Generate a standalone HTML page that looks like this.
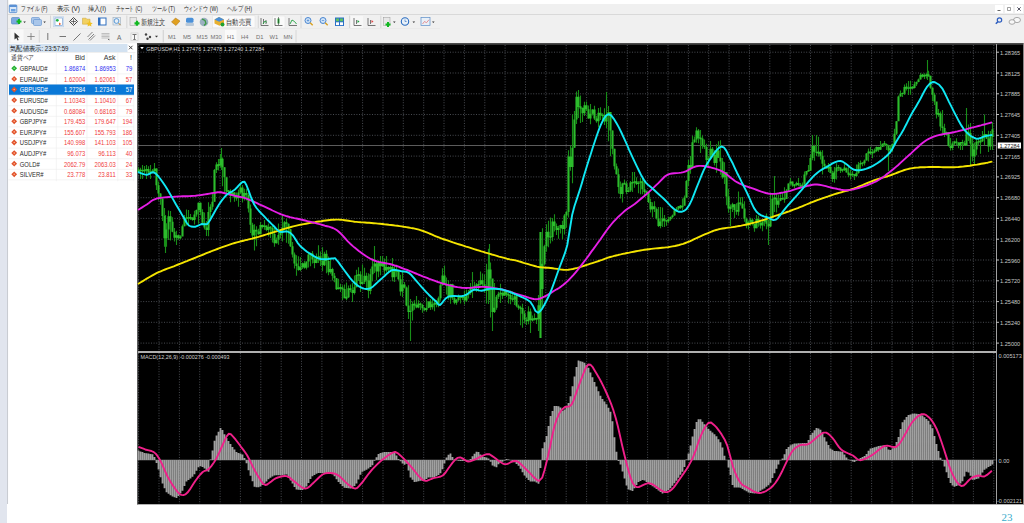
<!DOCTYPE html>
<html><head><meta charset="utf-8">
<style>
html,body{margin:0;padding:0;width:1024px;height:523px;overflow:hidden;background:#fff;}
svg{position:absolute;left:0;top:0;display:block;}
text{font-family:"Liberation Sans",sans-serif;}
.mn{font-size:7.2px;fill:#262626;}
.tb{font-size:7.5px;fill:#333;}
.tf{font-size:5.8px;fill:#707070;}
.mw{font-size:7px;fill:#333;}
.bid{font-size:6.9px;fill:#f04848;text-anchor:end;}
.blu{font-size:6.9px;fill:#3b3bf0;text-anchor:end;}
.wh{font-size:6.9px;fill:#fff;text-anchor:end;}
.ax{font-size:5.6px;fill:#c8c8c8;}
</style></head><body>
<svg width="1024" height="523" viewBox="0 0 1024 523" shape-rendering="auto">
<!-- page background -->
<rect x="0" y="0" width="1024" height="523" fill="#ffffff"/>
<rect x="0" y="0" width="7" height="523" fill="#e1e5ee"/>
<rect x="7" y="0" width="1.2" height="504" fill="#c9ccd2"/>
<!-- menu + toolbars -->
<rect x="8" y="4" width="1016" height="39.5" fill="#f0f0f0"/>
<rect x="8" y="14" width="1016" height="0.8" fill="#d4d4d4"/>
<rect x="8" y="28.4" width="432" height="0.6" fill="#e2e2e2"/>
<!-- window buttons -->
<rect x="995" y="5" width="8" height="8" fill="#fff"/>
<rect x="1005" y="5" width="8" height="8" fill="#fff"/>
<rect x="1015" y="5" width="8" height="8" fill="#fff"/>
<path d="M997.5 10.5h3" stroke="#555" stroke-width="0.9"/>
<path d="M1007.5 7.5h3v3h-3z" stroke="#777" stroke-width="0.7" fill="none"/>
<path d="M1017.3 7.3l3.4 3.4M1020.7 7.3l-3.4 3.4" stroke="#445" stroke-width="0.9"/>
<!-- menu -->
<rect x="9.3" y="5" width="7.5" height="7.6" rx="0.8" fill="#dbe8f7" stroke="#5a90d4" stroke-width="0.9"/>
<rect x="9.3" y="5" width="7.5" height="2" fill="#5a90d4"/>
<rect x="11" y="9" width="4.5" height="2.5" fill="#6aa0e0"/>
<text class="mn" x="21" y="11.3" textLength="26.5" lengthAdjust="spacingAndGlyphs">ファイル (F)</text>
<text class="mn" x="57" y="11.3" textLength="23" lengthAdjust="spacingAndGlyphs">表示 (V)</text>
<text class="mn" x="88" y="11.3" textLength="18" lengthAdjust="spacingAndGlyphs">挿入(I)</text>
<text class="mn" x="115.5" y="11.3" textLength="26.5" lengthAdjust="spacingAndGlyphs">チャート (C)</text>
<text class="mn" x="151.5" y="11.3" textLength="23.5" lengthAdjust="spacingAndGlyphs">ツール (T)</text>
<text class="mn" x="183.5" y="11.3" textLength="34.5" lengthAdjust="spacingAndGlyphs">ウィンドウ (W)</text>
<text class="mn" x="227" y="11.3" textLength="25" lengthAdjust="spacingAndGlyphs">ヘルプ (H)</text>
<!-- right icons -->
<circle cx="999.5" cy="20" r="2.2" fill="none" stroke="#2f5fc0" stroke-width="1.2"/>
<path d="M998 21.6l-2.2 2.2" stroke="#2f5fc0" stroke-width="1.5"/>
<ellipse cx="1017" cy="20" rx="3.5" ry="2.6" fill="#f8f8f8" stroke="#888" stroke-width="0.7"/>
<ellipse cx="1012" cy="22" rx="3" ry="2.3" fill="#f8f8f8" stroke="#888" stroke-width="0.7"/>
<!-- toolbar 1 -->
<rect x="8.5" y="15" width="431.5" height="13.4" fill="#f0f0f0"/>
<g>
 <rect x="11.5" y="17.5" width="8" height="6.5" rx="1" fill="#7aa8de" stroke="#4d7fc0" stroke-width="0.6"/>
 <path d="M16.5 21.5h5M19 19v5" stroke="#10b820" stroke-width="2.2"/>
 <path d="M23.3 21.5h2.6l-1.3 1.5z" fill="#333"/>
 <rect x="31.5" y="17.5" width="8" height="6" rx="1" fill="#a9c6ea" stroke="#5d8fcc" stroke-width="0.6"/>
 <rect x="33.5" y="19.5" width="8" height="6" rx="1" fill="#a9c6ea" stroke="#5d8fcc" stroke-width="0.6"/>
 <path d="M43.3 21.5h2.6l-1.3 1.5z" fill="#333"/>
 <path d="M50.5 15.5V28" stroke="#d0d0d0" stroke-width="0.8"/>
 <rect x="53.5" y="16.8" width="10.2" height="10" fill="#dfe9f5" stroke="#bcd0e8" stroke-width="0.6"/>
 <rect x="55" y="18" width="7.5" height="7.5" fill="#fff" stroke="#6b9ad0" stroke-width="0.6"/>
 <circle cx="57.3" cy="20.3" r="1.4" fill="#20b040"/>
 <path d="M59 22.5l2.3 1.6-2.3 1.2z" fill="#e86030"/>
 <path d="M73.5 17.5l4 4-4 4-4-4z" fill="none" stroke="#444" stroke-width="1"/>
 <path d="M73.5 19v5M71 21.5h5" stroke="#444" stroke-width="0.7"/>
 <path d="M82.5 18.2h3.5l1 1h3v5h-7.5z" fill="#f2d060" stroke="#c9a030" stroke-width="0.5"/>
 <path d="M89.5 20.5l1 2.2 2.2.2-1.7 1.5.5 2.2-2-1.2-2 1.2.5-2.2-1.7-1.5 2.2-.2z" fill="#f0c020"/>
 <rect x="98" y="17.5" width="8.5" height="8" fill="#2f6fc0"/>
 <rect x="100.5" y="18.5" width="5" height="6" fill="#fff"/>
 <rect x="113" y="17.5" width="7.5" height="7.5" fill="#e8eef5" stroke="#9ab" stroke-width="0.6"/>
 <circle cx="116.5" cy="21" r="2.4" fill="none" stroke="#4a90d0" stroke-width="0.9"/>
 <path d="M118.5 23l2 2.2" stroke="#b08030" stroke-width="1"/>
 <path d="M126.8 15.5V28" stroke="#d0d0d0" stroke-width="0.8"/>
 <rect x="130" y="17.5" width="6.5" height="8" fill="#e8e8e8" stroke="#999" stroke-width="0.5"/>
 <path d="M134.5 23.3h5M137 20.8v5" stroke="#10b820" stroke-width="2.2"/>
 <text class="tb" x="140.5" y="24.5" textLength="24.5" lengthAdjust="spacingAndGlyphs">新規注文</text>
 <path d="M171.5 22l4-4 4.5 3-4 4.5z" fill="#e0a020" stroke="#a87010" stroke-width="0.5"/>
 <rect x="186" y="17.8" width="7.5" height="5" rx="1.5" fill="#4a90d8"/>
 <rect x="185.5" y="23" width="8.5" height="3" rx="1" fill="#b8c8d8"/>
 <circle cx="204" cy="22" r="4.3" fill="#9bb0c0"/>
 <path d="M202 19l3 1.5 1 3-2 2" fill="none" stroke="#3a9a40" stroke-width="1.2"/>
 <rect x="212.5" y="15.8" width="42.5" height="12" fill="#fafafa" stroke="#e0e0e0" stroke-width="0.5"/>
 <path d="M214.5 19.5l4.5-2.5 5 2.5v4l-4.5 2.3-5-2.3z" fill="#e8b030"/>
 <path d="M214.5 19.5l4.5-2.5 5 2.5-4.8 2.2z" fill="#4a8fd8"/>
 <circle cx="222.5" cy="24.5" r="2" fill="#20a030"/>
 <text class="tb" x="226" y="24.5" textLength="25" lengthAdjust="spacingAndGlyphs">自動売買</text>
 <path d="M258.3 15.5V28" stroke="#d0d0d0" stroke-width="0.8"/>
 <path d="M261 18v7.5h7.5M263.5 19v5M266 20v4" stroke="#555" stroke-width="0.8" fill="none"/>
 <path d="M263 24l2-3 2 1.5" stroke="#20a040" stroke-width="0.9" fill="none"/>
 <rect x="272.5" y="16" width="12.5" height="12" fill="#fafafa" stroke="#e2e2e2" stroke-width="0.5"/>
 <path d="M275 18v7.5h7.5" stroke="#555" stroke-width="0.8" fill="none"/>
 <rect x="277.5" y="18.5" width="2" height="5" fill="#30b040"/>
 <path d="M278.5 17v8" stroke="#222" stroke-width="0.5"/>
 <path d="M289 18v7.5h8" stroke="#555" stroke-width="0.8" fill="none"/>
 <path d="M290 24l2-4 2.5 1.5 2 2.5" stroke="#20a040" stroke-width="0.9" fill="none"/>
 <path d="M301 15.5V28" stroke="#d0d0d0" stroke-width="0.8"/>
 <circle cx="308" cy="20.5" r="3" fill="#cfe3f7" stroke="#3a7acc" stroke-width="0.9"/>
 <path d="M306.8 20.5h2.4M308 19.3v2.4" stroke="#3a7acc" stroke-width="0.6"/>
 <path d="M310.2 22.8l2.5 2.5" stroke="#d8a020" stroke-width="1.4"/>
 <circle cx="323" cy="20.5" r="3" fill="#cfe3f7" stroke="#3a7acc" stroke-width="0.9"/>
 <path d="M321.8 20.5h2.4" stroke="#3a7acc" stroke-width="0.6"/>
 <path d="M325.2 22.8l2.5 2.5" stroke="#d8a020" stroke-width="1.4"/>
 <rect x="335" y="17.5" width="9" height="8.5" fill="#2a70c8"/>
 <rect x="336" y="18.5" width="3" height="2.8" fill="#5ec060"/><rect x="340" y="18.5" width="3" height="2.8" fill="#5ec060"/>
 <rect x="336" y="22.3" width="3" height="2.8" fill="#fff"/><rect x="340" y="22.3" width="3" height="2.8" fill="#fff"/>
 <path d="M349.5 15.5V28" stroke="#d0d0d0" stroke-width="0.8"/>
 <rect x="351" y="16" width="12" height="12" fill="#f7f7f7"/>
 <path d="M354 18v7.5h7.5M356.5 20v4" stroke="#555" stroke-width="0.8" fill="none"/>
 <path d="M357.5 20l2 1.5-2 1.5z" fill="#20a040"/>
 <path d="M368 18v7.5h7.5M370.5 20v4" stroke="#555" stroke-width="0.8" fill="none"/>
 <path d="M371.5 20l2 1.5-2 1.5z" fill="#e04040"/>
 <path d="M380.8 15.5V28" stroke="#d0d0d0" stroke-width="0.8"/>
 <rect x="383.5" y="17.5" width="6.5" height="8" fill="#e8e8e8" stroke="#999" stroke-width="0.5"/>
 <path d="M385.5 24.5h5M388 22v5" stroke="#10b820" stroke-width="2"/>
 <path d="M393 21.5h2.6l-1.3 1.5z" fill="#333"/>
 <circle cx="405" cy="21.5" r="3.7" fill="#e8f0f8" stroke="#2a6cc0" stroke-width="1.1"/>
 <path d="M405 19.5v2h1.6" stroke="#2a6cc0" stroke-width="0.6" fill="none"/>
 <path d="M412.5 21.5h2.6l-1.3 1.5z" fill="#333"/>
 <rect x="421" y="17.5" width="9" height="8" fill="#e8f0f8" stroke="#5a8cc8" stroke-width="0.7"/>
 <path d="M422.5 24l2-2.5 2 1.2 2.5-3" stroke="#e05050" stroke-width="0.6" fill="none"/>
 <path d="M432 21.5h2.6l-1.3 1.5z" fill="#333"/>
</g>
<!-- toolbar 2 -->
<g>
 <rect x="10.5" y="29.5" width="13" height="13" fill="#f9f9f9"/>
 <path d="M14.5 32.5v7l1.8-1.6 1.4 2.6 1-.5-1.3-2.5 2.3-.2z" fill="#333"/>
 <path d="M31 33v7M27.3 36.5h7.4" stroke="#777" stroke-width="0.8"/>
 <path d="M39.3 30V42.5" stroke="#d0d0d0" stroke-width="0.8"/>
 <path d="M47.8 33v7" stroke="#666" stroke-width="0.9"/>
 <path d="M59.5 36.5h6.5" stroke="#666" stroke-width="0.9"/>
 <path d="M73.5 40.5l7-7" stroke="#666" stroke-width="0.9"/>
 <path d="M87.5 37l5-5M88.5 39.5l5.5-5.5M90 40.5l5-5" stroke="#666" stroke-width="0.8"/>
 <path d="M101.5 33.5h8M101.5 35h8M101.5 36.5h8M101.5 38h8" stroke="#aaa" stroke-width="0.7"/><path d="M108 39.3l1.5 0.5" stroke="#555" stroke-width="0.9"/>
 <text x="117" y="39.6" style="font-size:6.5px;fill:#666">A</text>
 <rect x="131" y="33" width="7" height="7.5" fill="#f6f6f6" stroke="#c8c8c8" stroke-width="0.6"/>
 <path d="M132.5 34.5h4M134.5 34.5v5M133.3 39.5h2.4" stroke="#777" stroke-width="1"/>
 <circle cx="146" cy="34.5" r="1.2" fill="#444"/><circle cx="150" cy="37" r="1.2" fill="#444"/><circle cx="147.5" cy="38.8" r="1.2" fill="#444"/>
 <path d="M155 35.8h3l-1.5 1.8z" fill="#333"/>
 <path d="M163.3 30V42.5" stroke="#d4d4d4" stroke-width="1.2"/>
 <text class="tf" x="168" y="38.8">M1</text>
 <text class="tf" x="183" y="38.8">M5</text>
 <text class="tf" x="196.5" y="38.8">M15</text>
 <text class="tf" x="210.5" y="38.8">M30</text>
 <rect x="225" y="30" width="11.5" height="12.5" fill="#fafafa"/>
 <text class="tf" x="227" y="38.8">H1</text>
 <text class="tf" x="241" y="38.8">H4</text>
 <text class="tf" x="256" y="38.8">D1</text>
 <text class="tf" x="269.5" y="38.8">W1</text>
 <text class="tf" x="283.5" y="38.8">MN</text>
 <path d="M296 30V42.5" stroke="#d0d0d0" stroke-width="0.8"/>
</g>
<!-- market watch -->
<rect x="8.2" y="43.5" width="128.3" height="461" fill="#ffffff"/>
<rect x="8.5" y="44" width="119" height="8" fill="#d3e2f1"/>
<text x="10" y="50.5" style="font-size:6.8px;fill:#1e1e1e" textLength="58.5" lengthAdjust="spacingAndGlyphs">気配値表示: 23:57:59</text>
<path d="M129 45.8l3.5 3.5M132.5 45.8l-3.5 3.5" stroke="#444" stroke-width="1"/>
<rect x="8.5" y="52.3" width="127" height="0.6" fill="#e4e4e4"/>
<text class="mw" x="11" y="60.3" textLength="23" lengthAdjust="spacingAndGlyphs">通貨ペア</text>
<text class="mw" x="85" y="60.3" text-anchor="end">Bid</text>
<text class="mw" x="115.5" y="60.3" text-anchor="end">Ask</text>
<text class="mw" x="132" y="60.3" text-anchor="end">!</text>
<path d="M56.3 52.5V181.2M87 52.5V181.2M117.8 52.5V181.2M133.8 52.5V181.2" stroke="#ececec" stroke-width="0.6"/>
<path d="M8.5 73.9H134" stroke="#ececec" stroke-width="0.6"/>
<path d="M14.2 65.4l2.9 2.9-2.9 2.9-2.9-2.9z" fill="#22b030"/>
<circle cx="14.2" cy="68.3" r="0.8" fill="#90e890"/>
<g transform="translate(19.8 71.1) scale(0.84 1)"><text x="0" y="0" style="font-size:7px;fill:#2a2a2a" text-anchor="start">GBPAUD#</text></g>
<g transform="translate(85.2 71.1) scale(0.84 1)"><text x="0" y="0" style="font-size:7px;fill:#2e2ef0" text-anchor="end">1.86874</text></g>
<g transform="translate(115.7 71.1) scale(0.84 1)"><text x="0" y="0" style="font-size:7px;fill:#2e2ef0" text-anchor="end">1.86953</text></g>
<g transform="translate(132.2 71.1) scale(0.84 1)"><text x="0" y="0" style="font-size:7px;fill:#2e2ef0" text-anchor="end">79</text></g>
<path d="M8.5 84.5H134" stroke="#ececec" stroke-width="0.6"/>
<path d="M14.2 76.0l2.9 2.9-2.9 2.9-2.9-2.9z" fill="#e0522a"/>
<circle cx="14.2" cy="78.9" r="0.8" fill="#ffb090"/>
<g transform="translate(19.8 81.7) scale(0.84 1)"><text x="0" y="0" style="font-size:7px;fill:#2a2a2a" text-anchor="start">EURAUD#</text></g>
<g transform="translate(85.2 81.7) scale(0.84 1)"><text x="0" y="0" style="font-size:7px;fill:#f03a3a" text-anchor="end">1.62004</text></g>
<g transform="translate(115.7 81.7) scale(0.84 1)"><text x="0" y="0" style="font-size:7px;fill:#f03a3a" text-anchor="end">1.62061</text></g>
<g transform="translate(132.2 81.7) scale(0.84 1)"><text x="0" y="0" style="font-size:7px;fill:#f03a3a" text-anchor="end">57</text></g>
<rect x="9" y="84.5" width="125" height="10.6" fill="#0a78d7"/>
<path d="M8.5 95.1H134" stroke="#ececec" stroke-width="0.6"/>
<path d="M14.2 86.6l2.9 2.9-2.9 2.9-2.9-2.9z" fill="#e0522a"/>
<circle cx="14.2" cy="89.5" r="0.8" fill="#ffb090"/>
<g transform="translate(19.8 92.3) scale(0.84 1)"><text x="0" y="0" style="font-size:7px;fill:#fff" text-anchor="start">GBPUSD#</text></g>
<g transform="translate(85.2 92.3) scale(0.84 1)"><text x="0" y="0" style="font-size:7px;fill:#ffffff" text-anchor="end">1.27284</text></g>
<g transform="translate(115.7 92.3) scale(0.84 1)"><text x="0" y="0" style="font-size:7px;fill:#ffffff" text-anchor="end">1.27341</text></g>
<g transform="translate(132.2 92.3) scale(0.84 1)"><text x="0" y="0" style="font-size:7px;fill:#ffffff" text-anchor="end">57</text></g>
<path d="M8.5 105.7H134" stroke="#ececec" stroke-width="0.6"/>
<path d="M14.2 97.2l2.9 2.9-2.9 2.9-2.9-2.9z" fill="#e0522a"/>
<circle cx="14.2" cy="100.1" r="0.8" fill="#ffb090"/>
<g transform="translate(19.8 102.9) scale(0.84 1)"><text x="0" y="0" style="font-size:7px;fill:#2a2a2a" text-anchor="start">EURUSD#</text></g>
<g transform="translate(85.2 102.9) scale(0.84 1)"><text x="0" y="0" style="font-size:7px;fill:#f03a3a" text-anchor="end">1.10343</text></g>
<g transform="translate(115.7 102.9) scale(0.84 1)"><text x="0" y="0" style="font-size:7px;fill:#f03a3a" text-anchor="end">1.10410</text></g>
<g transform="translate(132.2 102.9) scale(0.84 1)"><text x="0" y="0" style="font-size:7px;fill:#f03a3a" text-anchor="end">67</text></g>
<path d="M8.5 116.3H134" stroke="#ececec" stroke-width="0.6"/>
<path d="M14.2 107.8l2.9 2.9-2.9 2.9-2.9-2.9z" fill="#e0522a"/>
<circle cx="14.2" cy="110.7" r="0.8" fill="#ffb090"/>
<g transform="translate(19.8 113.5) scale(0.84 1)"><text x="0" y="0" style="font-size:7px;fill:#2a2a2a" text-anchor="start">AUDUSD#</text></g>
<g transform="translate(85.2 113.5) scale(0.84 1)"><text x="0" y="0" style="font-size:7px;fill:#f03a3a" text-anchor="end">0.68084</text></g>
<g transform="translate(115.7 113.5) scale(0.84 1)"><text x="0" y="0" style="font-size:7px;fill:#f03a3a" text-anchor="end">0.68163</text></g>
<g transform="translate(132.2 113.5) scale(0.84 1)"><text x="0" y="0" style="font-size:7px;fill:#f03a3a" text-anchor="end">79</text></g>
<path d="M8.5 126.9H134" stroke="#ececec" stroke-width="0.6"/>
<path d="M14.2 118.4l2.9 2.9-2.9 2.9-2.9-2.9z" fill="#e0522a"/>
<circle cx="14.2" cy="121.3" r="0.8" fill="#ffb090"/>
<g transform="translate(19.8 124.1) scale(0.84 1)"><text x="0" y="0" style="font-size:7px;fill:#2a2a2a" text-anchor="start">GBPJPY#</text></g>
<g transform="translate(85.2 124.1) scale(0.84 1)"><text x="0" y="0" style="font-size:7px;fill:#f03a3a" text-anchor="end">179.453</text></g>
<g transform="translate(115.7 124.1) scale(0.84 1)"><text x="0" y="0" style="font-size:7px;fill:#f03a3a" text-anchor="end">179.647</text></g>
<g transform="translate(132.2 124.1) scale(0.84 1)"><text x="0" y="0" style="font-size:7px;fill:#f03a3a" text-anchor="end">194</text></g>
<path d="M8.5 137.5H134" stroke="#ececec" stroke-width="0.6"/>
<path d="M14.2 129.0l2.9 2.9-2.9 2.9-2.9-2.9z" fill="#e0522a"/>
<circle cx="14.2" cy="131.9" r="0.8" fill="#ffb090"/>
<g transform="translate(19.8 134.7) scale(0.84 1)"><text x="0" y="0" style="font-size:7px;fill:#2a2a2a" text-anchor="start">EURJPY#</text></g>
<g transform="translate(85.2 134.7) scale(0.84 1)"><text x="0" y="0" style="font-size:7px;fill:#f03a3a" text-anchor="end">155.607</text></g>
<g transform="translate(115.7 134.7) scale(0.84 1)"><text x="0" y="0" style="font-size:7px;fill:#f03a3a" text-anchor="end">155.793</text></g>
<g transform="translate(132.2 134.7) scale(0.84 1)"><text x="0" y="0" style="font-size:7px;fill:#f03a3a" text-anchor="end">186</text></g>
<path d="M8.5 148.1H134" stroke="#ececec" stroke-width="0.6"/>
<path d="M14.2 139.6l2.9 2.9-2.9 2.9-2.9-2.9z" fill="#e0522a"/>
<circle cx="14.2" cy="142.5" r="0.8" fill="#ffb090"/>
<g transform="translate(19.8 145.3) scale(0.84 1)"><text x="0" y="0" style="font-size:7px;fill:#2a2a2a" text-anchor="start">USDJPY#</text></g>
<g transform="translate(85.2 145.3) scale(0.84 1)"><text x="0" y="0" style="font-size:7px;fill:#f03a3a" text-anchor="end">140.998</text></g>
<g transform="translate(115.7 145.3) scale(0.84 1)"><text x="0" y="0" style="font-size:7px;fill:#f03a3a" text-anchor="end">141.103</text></g>
<g transform="translate(132.2 145.3) scale(0.84 1)"><text x="0" y="0" style="font-size:7px;fill:#f03a3a" text-anchor="end">105</text></g>
<path d="M8.5 158.7H134" stroke="#ececec" stroke-width="0.6"/>
<path d="M14.2 150.2l2.9 2.9-2.9 2.9-2.9-2.9z" fill="#e0522a"/>
<circle cx="14.2" cy="153.1" r="0.8" fill="#ffb090"/>
<g transform="translate(19.8 155.9) scale(0.84 1)"><text x="0" y="0" style="font-size:7px;fill:#2a2a2a" text-anchor="start">AUDJPY#</text></g>
<g transform="translate(85.2 155.9) scale(0.84 1)"><text x="0" y="0" style="font-size:7px;fill:#f03a3a" text-anchor="end">96.073</text></g>
<g transform="translate(115.7 155.9) scale(0.84 1)"><text x="0" y="0" style="font-size:7px;fill:#f03a3a" text-anchor="end">96.113</text></g>
<g transform="translate(132.2 155.9) scale(0.84 1)"><text x="0" y="0" style="font-size:7px;fill:#f03a3a" text-anchor="end">40</text></g>
<path d="M8.5 169.3H134" stroke="#ececec" stroke-width="0.6"/>
<path d="M14.2 160.8l2.9 2.9-2.9 2.9-2.9-2.9z" fill="#e0522a"/>
<circle cx="14.2" cy="163.7" r="0.8" fill="#ffb090"/>
<g transform="translate(19.8 166.5) scale(0.84 1)"><text x="0" y="0" style="font-size:7px;fill:#2a2a2a" text-anchor="start">GOLD#</text></g>
<g transform="translate(85.2 166.5) scale(0.84 1)"><text x="0" y="0" style="font-size:7px;fill:#f03a3a" text-anchor="end">2062.79</text></g>
<g transform="translate(115.7 166.5) scale(0.84 1)"><text x="0" y="0" style="font-size:7px;fill:#f03a3a" text-anchor="end">2063.03</text></g>
<g transform="translate(132.2 166.5) scale(0.84 1)"><text x="0" y="0" style="font-size:7px;fill:#f03a3a" text-anchor="end">24</text></g>
<path d="M8.5 179.9H134" stroke="#ececec" stroke-width="0.6"/>
<path d="M14.2 171.4l2.9 2.9-2.9 2.9-2.9-2.9z" fill="#e0522a"/>
<circle cx="14.2" cy="174.3" r="0.8" fill="#ffb090"/>
<g transform="translate(19.8 177.1) scale(0.84 1)"><text x="0" y="0" style="font-size:7px;fill:#2a2a2a" text-anchor="start">SILVER#</text></g>
<g transform="translate(85.2 177.1) scale(0.84 1)"><text x="0" y="0" style="font-size:7px;fill:#f03a3a" text-anchor="end">23.778</text></g>
<g transform="translate(115.7 177.1) scale(0.84 1)"><text x="0" y="0" style="font-size:7px;fill:#f03a3a" text-anchor="end">23.811</text></g>
<g transform="translate(132.2 177.1) scale(0.84 1)"><text x="0" y="0" style="font-size:7px;fill:#f03a3a" text-anchor="end">33</text></g>
<!-- chart frame -->
<rect x="137" y="43.3" width="887" height="461" fill="#000"/>
<rect x="137" y="43.3" width="1.2" height="461" fill="#5a5a5a"/>
<rect x="137" y="43.3" width="887" height="1.4" fill="#4a4a4a"/>
<rect x="1023" y="43.2" width="1" height="461" fill="#8a8a8a"/>
<path d="M138.6 45V351M138.6 353V504M159.0 45V351M159.0 353V504M179.4 45V351M179.4 353V504M199.7 45V351M199.7 353V504M220.1 45V351M220.1 353V504M240.4 45V351M240.4 353V504M260.8 45V351M260.8 353V504M281.2 45V351M281.2 353V504M301.5 45V351M301.5 353V504M321.9 45V351M321.9 353V504M342.2 45V351M342.2 353V504M362.6 45V351M362.6 353V504M383.0 45V351M383.0 353V504M403.3 45V351M403.3 353V504M423.7 45V351M423.7 353V504M444.0 45V351M444.0 353V504M464.4 45V351M464.4 353V504M484.8 45V351M484.8 353V504M505.1 45V351M505.1 353V504M525.5 45V351M525.5 353V504M545.8 45V351M545.8 353V504M566.2 45V351M566.2 353V504M586.6 45V351M586.6 353V504M606.9 45V351M606.9 353V504M627.3 45V351M627.3 353V504M647.6 45V351M647.6 353V504M668.0 45V351M668.0 353V504M688.4 45V351M688.4 353V504M708.7 45V351M708.7 353V504M729.1 45V351M729.1 353V504M749.4 45V351M749.4 353V504M769.8 45V351M769.8 353V504M790.2 45V351M790.2 353V504M810.5 45V351M810.5 353V504M830.9 45V351M830.9 353V504M851.2 45V351M851.2 353V504M871.6 45V351M871.6 353V504M892.0 45V351M892.0 353V504M912.3 45V351M912.3 353V504M932.7 45V351M932.7 353V504M953.0 45V351M953.0 353V504M973.4 45V351M973.4 353V504M993.8 45V351M993.8 353V504M138 52.2H996M138 73.0H996M138 93.8H996M138 114.5H996M138 135.3H996M138 156.1H996M138 176.9H996M138 197.7H996M138 218.4H996M138 239.2H996M138 260.0H996M138 280.8H996M138 301.6H996M138 322.3H996M138 343.1H996" stroke="#5a5e66" stroke-width="0.8" stroke-dasharray="1 1.6" fill="none"/>
<path d="M138 145.5H996" stroke="#9a9a9a" stroke-width="0.6"/>
<path d="M138.5 167.2V172.3M140.5 167.7V179.0M142.5 165.0V179.0M144.5 166.1V173.4M146.5 165.0V179.0M148.5 166.2V173.5M150.5 165.0V179.0M152.5 169.0V173.1M154.5 162.9V173.5M156.5 168.2V190.1M158.5 181.4V200.4M160.5 193.2V204.7M162.5 198.5V221.0M164.5 207.9V246.8M166.5 223.2V246.7M168.5 210.5V240.1M170.5 210.9V240.6M172.5 217.3V232.2M174.5 228.1V241.5M176.5 230.8V245.0M178.5 234.5V239.7M180.5 235.3V239.3M182.5 224.6V232.5M184.5 215.1V226.3M186.5 209.4V225.6M188.5 210.0V226.1M190.5 214.0V219.9M192.5 217.2V220.7M194.5 210.7V224.5M196.5 209.4V216.8M198.5 202.6V223.7M200.5 202.6V215.2M202.5 209.2V224.5M204.5 212.5V229.4M206.5 221.0V236.0M208.5 202.3V236.3M210.5 204.3V218.4M212.5 192.7V209.8M214.5 168.9V201.7M216.5 162.3V172.9M218.5 159.1V170.4M220.5 153.9V167.6M222.5 157.5V186.2M224.5 167.3V192.0M226.5 177.3V193.3M228.5 190.3V195.3M230.5 189.3V202.3M232.5 191.3V196.6M234.5 192.0V201.8M236.5 192.6V200.7M238.5 189.5V206.8M240.5 182.2V193.7M242.5 185.1V202.4M244.5 188.8V200.4M246.5 188.8V200.6M248.5 192.5V212.6M250.5 204.5V232.9M252.5 222.8V239.8M254.5 224.2V250.5M256.5 226.2V246.3M258.5 228.7V234.8M260.5 222.0V234.2M262.5 224.6V228.5M264.5 220.0V229.7M266.5 225.5V231.2M268.5 223.6V236.4M270.5 226.3V238.1M272.5 226.1V242.4M274.5 227.8V246.8M276.5 237.5V243.6M278.5 223.6V244.8M280.5 230.0V238.4M282.5 215.1V241.6M284.5 220.9V229.9M286.5 218.9V242.8M288.5 223.6V243.8M290.5 229.0V247.1M292.5 241.9V257.5M294.5 252.5V268.5M296.5 255.2V275.8M298.5 256.2V270.7M300.5 257.2V271.2M302.5 262.6V269.1M304.5 260.9V268.7M306.5 261.6V269.4M308.5 252.1V267.5M310.5 252.8V266.2M312.5 250.9V263.4M314.5 257.3V268.2M316.5 253.4V263.2M318.5 245.2V262.9M320.5 251.5V265.9M322.5 247.2V271.1M324.5 251.7V265.9M326.5 250.2V273.3M328.5 256.5V275.2M330.5 259.3V273.7M332.5 267.7V280.4M334.5 273.1V282.2M336.5 278.0V289.9M338.5 278.8V289.3M340.5 283.8V292.0M342.5 285.3V300.1M344.5 284.4V298.3M346.5 282.6V300.2M348.5 285.4V297.9M350.5 284.4V292.3M352.5 283.1V301.9M354.5 275.5V294.6M356.5 269.8V287.2M358.5 267.2V280.9M360.5 271.3V292.1M362.5 264.5V284.3M364.5 267.8V284.1M366.5 272.7V288.2M368.5 273.2V298.3M370.5 268.8V294.2M372.5 258.2V281.2M374.5 260.7V273.0M376.5 261.2V280.2M378.5 260.6V277.2M380.5 256.0V275.3M382.5 256.0V266.7M384.5 258.4V274.6M386.5 256.0V272.5M388.5 266.3V272.6M390.5 265.4V271.1M392.5 257.9V281.3M394.5 266.1V281.9M396.5 264.7V276.7M398.5 270.0V280.2M400.5 274.7V295.8M402.5 271.4V297.1M404.5 282.0V288.5M406.5 286.4V306.3M408.5 285.3V319.1M410.5 299.0V320.0M412.5 301.6V320.4M414.5 300.2V309.8M416.5 296.1V308.3M418.5 300.3V308.3M420.5 302.4V310.1M422.5 303.7V312.7M424.5 307.2V311.2M426.5 297.5V311.8M428.5 301.3V308.3M430.5 299.3V310.1M432.5 298.7V309.6M434.5 299.3V311.3M436.5 299.9V307.2M438.5 296.6V307.2M440.5 282.3V300.8M442.5 268.2V285.5M444.5 265.5V284.8M446.5 277.4V294.4M448.5 280.2V299.8M450.5 283.8V303.8M452.5 283.7V300.0M454.5 295.9V304.3M456.5 299.1V304.8M458.5 294.4V300.9M460.5 296.1V303.6M462.5 296.6V299.9M464.5 290.8V304.6M466.5 289.4V302.0M468.5 289.9V298.4M470.5 282.9V294.8M472.5 271.9V298.1M474.5 281.8V290.2M476.5 283.0V291.9M478.5 280.7V291.6M480.5 271.4V285.5M482.5 273.6V286.9M484.5 274.6V292.8M486.5 263.8V303.4M488.5 248.8V303.9M490.5 262.5V317.5M492.5 280.6V312.8M494.5 283.0V312.9M496.5 294.9V309.7M498.5 291.7V299.1M500.5 283.7V303.0M502.5 291.3V299.0M504.5 290.1V295.7M506.5 290.4V297.0M508.5 293.1V303.5M510.5 290.5V304.2M512.5 291.2V301.7M514.5 293.2V304.9M516.5 295.3V307.2M518.5 304.6V309.8M520.5 305.8V325.2M522.5 303.8V327.8M524.5 310.4V323.6M526.5 317.3V325.1M528.5 306.2V324.2M530.5 308.4V332.9M532.5 315.6V321.4M534.5 313.4V320.4M536.5 317.7V323.9M538.5 295.1V330.9M540.5 264.9V317.2M542.5 228.2V307.6M544.5 244.7V265.6M546.5 224.3V251.7M548.5 220.7V247.3M550.5 217.6V243.5M552.5 218.0V241.2M554.5 214.2V231.4M556.5 223.4V235.1M558.5 225.7V238.8M560.5 224.8V233.6M562.5 220.8V239.2M564.5 214.0V234.5M566.5 210.4V227.5M568.5 150.2V217.5M570.5 145.4V170.8M572.5 114.5V183.2M574.5 110.9V147.7M576.5 91.5V124.1M578.5 91.9V112.9M580.5 95.4V123.1M582.5 107.7V122.1M584.5 101.7V116.1M586.5 101.4V110.9M588.5 105.6V118.7M590.5 104.1V124.2M592.5 109.2V115.4M594.5 105.7V119.9M596.5 115.7V122.7M598.5 107.9V127.2M600.5 107.2V119.9M602.5 113.2V121.8M604.5 108.3V124.9M606.5 112.0V128.0M608.5 106.0V141.2M610.5 112.0V156.2M612.5 130.4V154.2M614.5 148.7V169.4M616.5 163.6V174.6M618.5 168.4V193.4M620.5 181.4V198.5M622.5 182.7V202.5M624.5 179.6V184.5M626.5 181.3V194.3M628.5 186.9V192.3M630.5 180.9V192.0M632.5 172.0V192.0M634.5 172.0V187.7M636.5 177.2V185.0M638.5 181.3V193.2M640.5 178.1V194.2M642.5 176.7V194.3M644.5 179.7V197.0M646.5 190.5V194.5M648.5 192.6V203.0M650.5 198.7V212.4M652.5 202.2V217.3M654.5 201.2V212.0M656.5 207.5V219.4M658.5 207.0V227.1M660.5 207.0V228.2M662.5 207.5V227.1M664.5 215.1V227.0M666.5 219.8V225.7M668.5 216.7V223.3M670.5 216.5V220.8M672.5 214.5V218.4M674.5 208.5V215.6M676.5 207.1V211.9M678.5 205.9V209.9M680.5 205.0V208.9M682.5 198.6V210.0M684.5 195.6V204.5M686.5 179.9V198.1M688.5 159.8V186.1M690.5 156.1V173.8M692.5 135.7V166.2M694.5 136.4V142.8M696.5 127.2V142.7M698.5 128.9V143.2M700.5 130.1V153.1M702.5 135.4V148.7M704.5 139.5V149.0M706.5 143.7V166.2M708.5 155.9V166.3M710.5 141.1V159.9M712.5 147.0V157.2M714.5 150.2V165.5M716.5 144.2V172.8M718.5 141.2V157.9M720.5 140.2V174.8M722.5 158.1V178.8M724.5 162.2V184.0M726.5 173.8V205.2M728.5 189.0V212.8M730.5 204.4V226.1M732.5 202.8V212.1M734.5 204.1V218.1M736.5 203.2V214.8M738.5 191.4V215.8M740.5 197.3V205.5M742.5 197.1V208.6M744.5 201.2V221.8M746.5 217.4V228.2M748.5 220.5V229.5M750.5 217.8V225.8M752.5 218.4V225.4M754.5 223.9V231.7M756.5 214.9V228.3M758.5 215.8V226.7M760.5 220.4V228.5M762.5 218.9V231.2M764.5 219.0V226.2M766.5 213.4V229.3M768.5 220.3V229.0M770.5 192.4V226.9M772.5 193.8V215.6M774.5 193.5V205.5M776.5 193.5V212.4M778.5 194.7V207.7M780.5 194.3V201.3M782.5 192.7V200.0M784.5 187.3V202.7M786.5 188.9V199.0M788.5 183.4V190.5M790.5 178.0V185.6M792.5 181.4V186.7M794.5 184.0V188.6M796.5 181.7V186.2M798.5 178.0V186.2M800.5 182.9V187.7M802.5 182.6V187.7M804.5 171.4V186.5M806.5 170.9V175.8M808.5 164.9V171.8M810.5 154.6V170.7M812.5 135.0V160.2M814.5 144.8V160.8M816.5 135.0V156.1M818.5 136.7V156.7M820.5 150.5V159.4M822.5 150.3V174.6M824.5 159.7V168.3M826.5 165.5V168.6M828.5 163.0V172.0M830.5 164.0V173.2M832.5 170.8V181.9M834.5 167.1V182.8M836.5 163.2V179.4M838.5 165.1V171.1M840.5 167.4V173.1M842.5 168.7V172.3M844.5 163.5V171.1M846.5 167.6V172.6M848.5 167.0V176.9M850.5 169.4V179.4M852.5 171.0V176.9M854.5 173.9V180.0M856.5 164.4V176.9M858.5 162.1V173.7M860.5 160.4V171.0M862.5 162.2V166.2M864.5 159.4V165.5M866.5 152.9V160.6M868.5 148.5V161.6M870.5 146.8V154.7M872.5 149.1V158.2M874.5 148.5V153.2M876.5 146.4V152.0M878.5 146.7V151.8M880.5 141.0V150.0M882.5 143.4V146.9M884.5 141.0V146.5M886.5 143.5V150.0M888.5 144.7V155.0M890.5 145.6V153.8M892.5 143.6V151.7M894.5 128.7V146.0M896.5 121.1V135.0M898.5 95.4V115.0M900.5 90.4V96.6M902.5 92.4V97.1M904.5 84.6V95.0M906.5 83.2V90.6M908.5 81.0V95.0M910.5 80.8V94.8M912.5 86.1V88.7M914.5 81.6V88.5M916.5 81.4V85.9M918.5 78.4V82.2M920.5 72.9V79.4M922.5 73.7V77.4M924.5 73.3V79.0M926.5 73.2V78.6M928.5 70.8V76.6M930.5 75.8V88.8M932.5 87.4V101.2M934.5 92.8V105.0M936.5 104.2V118.5M938.5 108.9V116.8M940.5 111.6V130.7M942.5 110.0V133.4M944.5 123.7V136.9M946.5 131.5V135.5M948.5 132.3V146.5M950.5 138.0V150.5M952.5 141.6V150.2M954.5 140.8V145.1M956.5 138.3V145.3M958.5 142.0V148.3M960.5 141.9V150.0M962.5 139.7V150.0M964.5 140.8V146.0M966.5 127.9V145.5M968.5 124.5V140.9M970.5 123.0V165.5M972.5 137.8V161.5M974.5 142.5V164.4M976.5 138.1V155.3M978.5 138.2V144.9M980.5 136.9V153.8M982.5 131.0V142.0M984.5 114.6V145.2M986.5 134.0V138.9M988.5 130.8V152.0M990.5 131.0V149.9M992.5 122.1V150.0M165.5 215.0V253.0M221.5 148.0V170.0M374.5 246.0V270.0M410.5 300.0V341.0M489.5 244.0V300.0M492.5 300.0V331.0M578.5 90.0V118.0M606.5 92.0V115.0M768.5 220.0V245.0M774.5 176.0V212.0M888.5 150.0V171.0M927.5 60.0V80.0M966.5 108.0V140.0" stroke="#188e18" stroke-width="1.1" fill="none"/>
<path d="M138.5 169.4V172.0M140.5 169.4V171.3M142.5 170.0V171.3M144.5 169.4V171.4M146.5 169.0V170.8M148.5 169.0V172.8M150.5 171.4V172.8M152.5 170.5V172.0M154.5 168.5V171.1M156.5 168.5V185.3M158.5 185.3V193.5M160.5 193.5V198.5M162.5 198.5V216.1M164.5 216.1V238.3M166.5 229.5V238.3M168.5 216.3V229.5M170.5 216.3V221.8M172.5 221.8V231.7M174.5 231.7V237.7M176.5 235.2V237.7M178.5 235.2V238.3M180.5 236.4V238.3M182.5 226.3V236.4M184.5 218.1V226.3M186.5 217.2V218.7M188.5 217.2V218.7M190.5 217.0V218.7M192.5 217.6V220.0M194.5 214.6V220.0M196.5 210.1V214.6M198.5 202.8V210.1M200.5 202.8V211.9M202.5 211.9V222.7M204.5 222.7V227.4M206.5 227.4V230.0M208.5 212.0V230.0M210.5 206.7V212.0M212.5 201.7V206.7M214.5 170.1V201.7M216.5 164.5V170.1M218.5 163.9V166.2M220.5 158.7V165.6M222.5 158.7V167.3M224.5 167.3V177.3M226.5 177.3V191.5M228.5 190.3V192.1M230.5 190.9V195.6M232.5 192.6V195.6M234.5 192.6V197.7M236.5 197.1V198.6M238.5 192.5V198.0M240.5 187.5V192.5M242.5 187.5V198.6M244.5 192.9V198.6M246.5 192.9V195.1M248.5 195.1V208.6M250.5 208.6V224.8M252.5 224.8V235.4M254.5 229.7V235.4M256.5 229.7V231.4M258.5 231.4V234.2M260.5 225.1V234.2M262.5 225.1V227.0M264.5 225.5V227.0M266.5 225.5V230.1M268.5 227.0V230.1M270.5 226.4V228.6M272.5 228.0V234.0M274.5 234.0V243.2M276.5 239.8V243.2M278.5 235.0V239.8M280.5 232.1V235.0M282.5 227.8V232.1M284.5 222.2V227.8M286.5 222.2V223.7M288.5 223.7V229.2M290.5 229.2V246.3M292.5 246.3V254.6M294.5 254.6V263.4M296.5 263.4V266.0M298.5 266.0V269.9M300.5 267.3V269.9M302.5 263.2V267.3M304.5 263.2V267.7M306.5 261.6V267.7M308.5 254.4V261.6M310.5 253.0V255.0M312.5 253.6V259.5M314.5 259.5V262.9M316.5 257.2V262.9M318.5 256.0V257.8M320.5 256.6V261.0M322.5 261.0V265.3M324.5 253.8V265.3M326.5 253.8V261.0M328.5 261.0V272.2M330.5 268.9V272.2M332.5 268.9V275.8M334.5 275.8V278.3M336.5 278.3V289.2M338.5 287.6V289.2M340.5 287.0V288.8M342.5 287.6V289.6M344.5 289.0V298.2M346.5 296.7V298.8M348.5 288.2V297.3M350.5 288.2V289.9M352.5 289.9V292.9M354.5 287.2V292.9M356.5 275.1V287.2M358.5 273.9V275.7M360.5 274.5V283.9M362.5 281.9V283.9M364.5 275.8V281.9M366.5 275.8V280.4M368.5 280.4V290.9M370.5 274.2V290.9M372.5 266.4V274.2M374.5 263.4V266.4M376.5 263.4V271.6M378.5 261.8V271.6M380.5 261.8V266.3M382.5 263.2V266.3M384.5 263.2V270.5M386.5 267.1V270.5M388.5 267.1V269.6M390.5 267.0V269.6M392.5 267.0V277.2M394.5 271.3V277.2M396.5 270.1V271.9M398.5 270.7V279.3M400.5 279.3V291.6M402.5 284.4V291.6M404.5 284.4V287.5M406.5 287.5V305.6M408.5 305.6V312.1M410.5 310.8V312.1M412.5 304.1V310.8M414.5 303.5V305.4M416.5 304.8V307.4M418.5 303.5V307.4M420.5 303.5V305.0M422.5 305.0V308.2M424.5 308.2V310.0M426.5 308.1V310.0M428.5 301.5V308.1M430.5 301.5V307.3M432.5 304.2V307.3M434.5 302.7V304.8M436.5 302.7V304.4M438.5 298.2V303.8M440.5 285.3V298.2M442.5 275.4V285.3M444.5 275.4V284.5M446.5 284.5V285.8M448.5 285.8V297.4M450.5 283.9V297.4M452.5 283.9V298.2M454.5 298.2V302.8M456.5 299.9V302.8M458.5 296.3V299.9M460.5 296.3V298.0M462.5 296.7V298.0M464.5 296.7V300.4M466.5 294.8V300.4M468.5 293.1V294.8M470.5 287.8V293.1M472.5 287.2V288.6M474.5 285.7V288.0M476.5 284.6V286.3M478.5 284.0V285.8M480.5 280.2V284.6M482.5 280.2V284.3M484.5 284.3V286.1M486.5 286.1V291.1M488.5 269.6V291.1M490.5 269.6V278.4M492.5 278.4V312.0M494.5 307.7V312.0M496.5 296.8V307.7M498.5 293.7V296.8M500.5 292.5V294.3M502.5 293.1V295.7M504.5 290.7V295.7M506.5 290.7V294.7M508.5 294.1V295.7M510.5 295.1V299.0M512.5 298.4V300.1M514.5 296.2V299.5M516.5 296.2V305.7M518.5 305.7V307.8M520.5 307.2V308.7M522.5 308.1V313.7M524.5 313.7V319.8M526.5 319.8V321.2M528.5 311.4V321.2M530.5 311.4V320.1M532.5 318.5V320.7M534.5 318.1V319.7M536.5 318.1V319.8M538.5 305.2V319.2M540.5 289.0V305.2M542.5 263.7V289.0M544.5 246.2V263.7M546.5 231.8V246.2M548.5 231.8V237.2M550.5 236.5V237.8M552.5 221.4V237.1M554.5 221.4V225.9M556.5 225.9V230.1M558.5 228.0V230.1M560.5 225.1V228.0M562.5 225.1V228.9M564.5 215.4V228.9M566.5 212.1V215.4M568.5 156.6V212.1M570.5 156.6V166.9M572.5 147.7V166.9M574.5 119.4V147.7M576.5 96.7V119.4M578.5 96.7V106.9M580.5 106.3V108.4M582.5 107.8V113.2M584.5 105.2V113.2M586.5 105.2V109.3M588.5 109.3V118.6M590.5 113.7V118.6M592.5 109.4V113.7M594.5 109.4V118.5M596.5 118.5V121.2M598.5 112.8V121.2M600.5 112.8V115.4M602.5 114.7V116.0M604.5 115.3V121.5M606.5 115.9V121.5M608.5 112.0V115.9M610.5 112.0V130.4M612.5 130.4V148.7M614.5 148.7V166.3M616.5 166.3V174.2M618.5 174.2V187.1M620.5 187.1V194.0M622.5 183.4V194.0M624.5 182.8V184.4M626.5 183.8V192.1M628.5 190.4V192.1M630.5 182.6V190.4M632.5 182.0V183.4M634.5 181.3V182.8M636.5 181.3V184.0M638.5 182.8V184.0M640.5 181.2V182.8M642.5 181.2V189.2M644.5 189.2V192.0M646.5 191.4V193.2M648.5 192.6V202.1M650.5 202.1V209.5M652.5 206.3V209.5M654.5 206.3V208.9M656.5 208.9V218.3M658.5 218.3V226.1M660.5 221.4V226.1M662.5 218.6V221.4M664.5 218.6V220.8M666.5 220.2V221.8M668.5 219.2V221.2M670.5 216.9V219.2M672.5 215.6V216.9M674.5 210.3V215.6M676.5 208.8V210.3M678.5 206.2V208.8M680.5 205.6V207.9M682.5 205.7V207.3M684.5 197.5V205.7M686.5 181.1V197.5M688.5 165.1V181.1M690.5 165.1V168.0M692.5 142.3V168.0M694.5 139.5V142.3M696.5 130.4V139.5M698.5 130.4V138.2M700.5 137.6V139.2M702.5 138.6V145.4M704.5 145.4V146.9M706.5 146.9V159.9M708.5 158.5V159.9M710.5 148.8V158.5M712.5 148.8V155.0M714.5 155.0V162.9M716.5 150.5V162.9M718.5 150.5V157.8M720.5 157.8V161.6M722.5 161.6V177.3M724.5 172.1V177.3M726.5 172.1V196.4M728.5 196.4V208.5M730.5 206.7V209.1M732.5 204.2V207.3M734.5 204.2V210.1M736.5 210.1V211.8M738.5 202.4V211.8M740.5 202.4V203.7M742.5 203.7V208.4M744.5 208.4V218.8M746.5 218.8V225.3M748.5 222.0V225.3M750.5 219.8V222.0M752.5 219.8V224.1M754.5 224.1V228.3M756.5 218.9V228.3M758.5 218.9V223.1M760.5 223.1V225.5M762.5 221.8V225.5M764.5 219.2V221.8M766.5 219.2V223.8M768.5 223.8V226.4M770.5 218.1V226.4M772.5 198.7V218.1M774.5 197.4V199.3M776.5 198.0V204.7M778.5 200.7V204.7M780.5 197.9V200.7M782.5 197.9V199.2M784.5 198.4V199.8M786.5 190.5V199.0M788.5 183.4V190.5M790.5 181.6V183.4M792.5 181.6V185.6M794.5 184.5V186.2M796.5 183.0V185.1M798.5 183.0V185.3M800.5 185.3V186.7M802.5 184.6V186.7M804.5 174.4V184.6M806.5 171.0V174.4M808.5 170.1V171.6M810.5 158.0V170.7M812.5 146.1V158.0M814.5 146.1V151.8M816.5 151.8V153.1M818.5 151.4V153.7M820.5 152.0V155.7M822.5 155.7V163.7M824.5 163.7V166.2M826.5 166.2V168.4M828.5 166.8V168.4M830.5 166.8V173.1M832.5 173.1V179.1M834.5 171.6V179.1M836.5 167.6V171.6M838.5 167.0V168.2M840.5 167.6V170.8M842.5 169.3V170.8M844.5 167.6V169.9M846.5 168.2V172.5M848.5 172.5V174.8M850.5 173.8V175.4M852.5 173.7V175.0M854.5 174.3V176.0M856.5 173.0V176.0M858.5 164.6V173.0M860.5 163.0V164.6M862.5 162.4V163.8M864.5 160.4V163.2M866.5 153.6V160.4M868.5 151.5V153.6M870.5 151.5V153.6M872.5 151.9V153.6M874.5 150.5V152.5M876.5 146.9V151.1M878.5 146.9V149.8M880.5 146.9V149.8M882.5 143.7V146.9M884.5 143.1V144.5M886.5 143.9V145.3M888.5 145.3V150.6M890.5 148.3V150.6M892.5 143.9V148.3M894.5 133.7V143.9M896.5 121.2V133.7M898.5 96.6V121.2M900.5 93.5V96.6M902.5 92.9V94.1M904.5 87.1V93.5M906.5 86.5V88.8M908.5 87.6V88.8M910.5 86.8V88.8M912.5 86.8V88.7M914.5 84.2V88.1M916.5 81.9V84.2M918.5 79.4V81.9M920.5 74.9V79.4M922.5 74.3V76.7M924.5 74.9V76.7M926.5 74.3V76.1M928.5 74.3V76.4M930.5 75.8V87.7M932.5 87.7V94.8M934.5 94.8V101.5M936.5 101.5V114.5M938.5 113.0V115.1M940.5 113.6V126.6M942.5 126.6V128.0M944.5 128.0V134.6M946.5 132.3V134.6M948.5 132.3V146.1M950.5 146.1V148.1M952.5 143.5V148.1M954.5 141.5V143.5M956.5 141.5V142.8M958.5 142.8V145.5M960.5 142.0V145.5M962.5 142.0V143.3M964.5 143.3V145.5M966.5 132.3V145.5M968.5 131.7V133.6M970.5 133.0V143.6M972.5 143.6V156.6M974.5 149.5V156.6M976.5 141.8V149.5M978.5 141.2V142.5M980.5 140.6V142.5M982.5 136.2V141.2M984.5 134.1V136.2M986.5 134.1V138.4M988.5 138.4V146.6M990.5 136.9V146.6M992.5 129.2V136.9M540.5 232V338" stroke="#2cbc2c" stroke-width="2.1" fill="none"/>
<path d="M138.0 284.0 L139.2 283.3 L140.8 282.3 L142.8 281.1 L144.9 279.8 L147.2 278.4 L149.6 277.0 L152.0 275.6 L154.3 274.3 L156.5 273.2 L158.6 272.2 L160.8 271.3 L162.9 270.4 L165.1 269.5 L167.3 268.7 L169.5 267.9 L171.6 267.1 L173.8 266.3 L176.0 265.4 L178.2 264.5 L180.4 263.7 L182.5 262.8 L184.7 261.9 L186.9 261.1 L189.1 260.2 L191.2 259.3 L193.4 258.5 L195.6 257.6 L197.8 256.7 L199.9 255.8 L202.1 255.0 L204.3 254.1 L206.4 253.2 L208.6 252.3 L210.8 251.5 L212.9 250.6 L215.1 249.8 L217.3 249.0 L219.5 248.2 L221.6 247.4 L223.8 246.6 L226.0 245.8 L228.2 245.1 L230.3 244.4 L232.5 243.7 L234.7 243.0 L236.9 242.4 L239.0 241.8 L241.2 241.2 L243.4 240.7 L245.5 240.2 L247.7 239.7 L249.9 239.1 L252.0 238.6 L254.2 238.0 L256.4 237.4 L258.5 236.8 L260.7 236.1 L262.9 235.5 L265.0 234.8 L267.2 234.2 L269.4 233.5 L271.5 232.8 L273.7 232.2 L275.9 231.5 L278.0 230.9 L280.2 230.2 L282.4 229.5 L284.5 228.8 L286.7 228.2 L288.9 227.6 L291.0 227.0 L293.2 226.4 L295.4 225.9 L297.5 225.4 L299.6 224.9 L301.7 224.5 L303.8 224.1 L306.0 223.7 L308.2 223.3 L310.5 222.9 L312.8 222.5 L314.8 222.2 L316.9 221.8 L319.0 221.5 L321.2 221.2 L323.4 220.8 L325.6 220.5 L327.8 220.2 L329.9 220.0 L332.1 219.8 L334.2 219.7 L336.2 219.6 L338.4 219.6 L340.5 219.7 L342.5 219.9 L344.6 220.2 L346.6 220.5 L348.6 220.8 L350.6 221.1 L352.5 221.4 L354.5 221.7 L356.5 221.9 L358.7 222.1 L360.8 222.3 L362.8 222.4 L364.9 222.5 L367.0 222.7 L369.1 222.8 L371.3 223.0 L373.6 223.2 L376.0 223.4 L377.9 223.6 L380.0 223.8 L382.1 224.0 L384.3 224.3 L386.5 224.5 L388.8 224.8 L391.0 225.0 L393.2 225.3 L395.4 225.6 L397.5 225.8 L399.6 226.1 L401.5 226.4 L403.9 226.8 L406.2 227.1 L408.4 227.5 L410.6 227.9 L412.7 228.2 L414.7 228.7 L416.8 229.2 L418.9 229.7 L421.0 230.3 L423.1 231.0 L425.3 231.8 L427.4 232.6 L429.4 233.5 L431.6 234.4 L433.7 235.4 L435.9 236.3 L438.2 237.2 L440.5 238.1 L442.5 238.8 L444.5 239.5 L446.6 240.2 L448.7 240.9 L450.8 241.6 L453.0 242.4 L455.2 243.1 L457.4 243.8 L459.6 244.5 L461.8 245.2 L464.0 245.9 L466.1 246.6 L468.2 247.2 L470.4 247.9 L472.6 248.6 L474.8 249.3 L477.0 250.0 L479.2 250.6 L481.4 251.3 L483.5 251.9 L485.5 252.6 L487.5 253.1 L489.3 253.7 L491.9 254.5 L494.4 255.2 L496.8 255.9 L499.0 256.6 L501.2 257.2 L503.2 257.7 L505.0 258.2 L506.8 258.7 L509.8 259.4 L512.1 259.8 L514.3 260.1 L516.5 260.6 L518.9 261.3 L521.2 262.0 L523.6 262.8 L526.3 263.6 L528.3 264.2 L530.4 264.8 L532.5 265.4 L534.7 266.0 L536.9 266.6 L539.0 267.0 L541.4 267.3 L543.6 267.5 L545.9 267.7 L548.2 267.8 L550.7 268.0 L552.7 268.3 L554.8 268.6 L557.1 268.9 L559.3 269.3 L561.5 269.6 L563.5 269.8 L565.4 269.9 L568.2 269.8 L570.6 269.4 L572.8 269.0 L575.1 268.4 L577.5 267.8 L579.9 267.1 L582.3 266.3 L584.9 265.5 L586.7 264.9 L588.5 264.3 L590.4 263.7 L592.4 263.1 L594.6 262.4 L597.0 261.6 L598.7 261.0 L600.4 260.4 L602.2 259.8 L604.0 259.1 L606.0 258.4 L608.0 257.7 L610.2 257.0 L612.6 256.4 L615.1 255.7 L616.9 255.3 L618.7 254.8 L620.7 254.4 L622.8 253.9 L624.9 253.5 L627.1 253.0 L629.3 252.6 L631.5 252.1 L633.8 251.7 L636.0 251.3 L638.2 250.9 L640.3 250.5 L642.4 250.1 L644.4 249.8 L646.7 249.5 L649.0 249.2 L651.3 248.9 L653.5 248.6 L655.8 248.4 L658.0 248.2 L660.1 248.0 L662.2 247.8 L664.2 247.6 L666.2 247.4 L668.0 247.2 L669.8 246.9 L672.5 246.4 L674.9 246.0 L677.1 245.5 L679.1 245.0 L681.1 244.4 L683.2 243.8 L685.4 243.0 L687.5 242.2 L689.7 241.3 L691.9 240.3 L694.2 239.2 L696.5 238.2 L698.7 237.1 L700.9 236.1 L703.0 235.2 L705.3 234.2 L707.5 233.3 L709.7 232.4 L711.8 231.5 L714.0 230.7 L716.2 230.0 L718.6 229.3 L720.5 228.9 L722.5 228.5 L724.5 228.2 L726.5 227.9 L728.6 227.6 L730.7 227.4 L732.8 227.1 L734.9 226.8 L737.0 226.4 L739.1 226.0 L741.3 225.6 L743.4 225.1 L745.6 224.7 L747.8 224.2 L750.0 223.7 L752.1 223.1 L754.3 222.6 L756.5 222.0 L758.7 221.4 L760.8 220.7 L763.0 220.1 L765.2 219.4 L767.3 218.6 L769.5 217.9 L771.7 217.2 L773.8 216.4 L776.0 215.7 L778.2 215.0 L780.4 214.2 L782.5 213.5 L784.7 212.8 L786.9 212.0 L789.1 211.3 L791.2 210.5 L793.4 209.7 L795.6 208.9 L797.8 208.1 L799.9 207.2 L802.1 206.3 L804.3 205.4 L806.4 204.5 L808.6 203.6 L810.8 202.7 L812.9 201.8 L815.1 201.0 L817.3 200.2 L819.5 199.4 L821.6 198.6 L823.8 197.8 L826.0 197.1 L828.2 196.4 L830.3 195.6 L832.5 194.9 L834.7 194.2 L836.9 193.5 L839.0 192.9 L841.2 192.3 L843.4 191.7 L845.5 191.1 L847.7 190.5 L849.9 189.8 L852.0 189.1 L854.2 188.4 L856.4 187.6 L858.6 186.7 L860.8 185.8 L863.1 184.9 L865.3 183.9 L867.5 183.0 L869.6 182.1 L871.7 181.3 L873.7 180.5 L876.1 179.7 L878.3 179.0 L880.4 178.3 L882.5 177.7 L884.7 177.1 L886.9 176.5 L889.3 175.7 L891.3 175.0 L893.4 174.2 L895.5 173.4 L897.7 172.5 L899.9 171.6 L902.2 170.8 L904.4 170.0 L906.7 169.4 L908.9 168.8 L910.9 168.4 L912.8 168.1 L914.6 167.8 L916.5 167.6 L918.4 167.5 L920.3 167.3 L922.4 167.2 L924.5 167.2 L926.7 167.1 L929.1 167.0 L930.9 167.0 L932.8 166.9 L934.8 167.0 L936.8 167.0 L938.9 167.0 L941.0 167.1 L943.2 167.2 L945.4 167.2 L947.6 167.2 L949.8 167.3 L952.0 167.3 L954.1 167.2 L956.3 167.1 L958.4 167.0 L960.6 166.8 L962.8 166.6 L965.1 166.3 L967.5 166.0 L969.9 165.7 L972.3 165.3 L974.6 164.9 L976.9 164.6 L979.1 164.2 L981.2 163.8 L983.1 163.5 L984.8 163.2 L986.4 162.9 L987.7 162.7 L991.7 161.7 L992.0 161.2" stroke="#f4e400" stroke-width="1.9" fill="none" stroke-linejoin="round"/>
<path d="M138.0 210.0 L139.6 209.0 L141.8 207.6 L144.3 206.0 L146.8 204.5 L148.9 203.0 L151.0 201.3 L153.4 199.8 L156.5 198.6 L158.2 198.2 L160.2 197.9 L162.3 197.6 L164.5 197.4 L166.8 197.2 L169.1 197.0 L171.5 196.9 L173.8 196.8 L176.0 196.6 L178.2 196.5 L180.4 196.4 L182.5 196.3 L184.7 196.2 L186.9 196.2 L189.1 196.1 L191.3 196.0 L193.4 195.9 L195.6 195.7 L197.8 195.4 L200.2 195.1 L202.6 194.8 L205.0 194.4 L207.3 194.0 L209.5 193.6 L211.6 193.2 L213.4 192.9 L215.0 192.7 L217.7 192.2 L218.9 192.1 L221.0 192.3 L222.8 192.7 L225.0 193.2 L227.4 193.8 L229.9 194.5 L232.3 195.1 L234.6 195.7 L237.0 196.2 L239.2 196.7 L241.3 197.1 L243.7 197.7 L246.4 198.6 L248.3 199.3 L250.3 200.2 L252.5 201.1 L254.7 202.1 L257.0 203.2 L259.3 204.3 L261.7 205.3 L264.0 206.4 L266.1 207.4 L268.2 208.4 L270.4 209.4 L272.5 210.5 L274.7 211.5 L276.9 212.5 L279.1 213.5 L281.3 214.4 L283.5 215.2 L285.7 215.9 L287.8 216.5 L290.0 217.1 L292.2 217.6 L294.3 218.1 L296.5 218.5 L298.7 219.0 L300.8 219.5 L303.0 220.0 L305.2 220.5 L307.4 221.1 L309.7 221.6 L311.9 222.2 L314.2 222.7 L316.4 223.3 L318.5 223.9 L320.6 224.4 L322.5 225.0 L324.8 225.7 L327.0 226.2 L329.0 226.7 L331.0 227.3 L332.9 228.0 L334.9 229.0 L337.0 230.3 L339.1 232.0 L341.3 234.1 L343.4 236.4 L345.6 238.8 L347.8 241.3 L350.2 243.7 L352.6 245.9 L354.6 247.6 L356.7 249.2 L358.8 250.9 L361.0 252.6 L363.3 254.2 L365.5 255.8 L367.8 257.2 L370.0 258.5 L372.2 259.6 L374.4 260.5 L376.7 261.3 L378.9 261.9 L381.2 262.4 L383.4 262.8 L385.6 263.2 L387.8 263.6 L389.8 264.0 L391.7 264.5 L394.3 265.3 L396.5 266.0 L398.6 266.7 L400.6 267.5 L402.8 268.3 L405.4 269.3 L407.3 270.0 L409.3 270.8 L411.5 271.7 L413.7 272.6 L415.9 273.5 L418.2 274.5 L420.5 275.4 L422.7 276.3 L424.9 277.1 L427.1 277.9 L429.2 278.8 L431.4 279.6 L433.6 280.4 L435.7 281.2 L437.9 282.0 L440.1 282.7 L442.2 283.4 L444.4 284.0 L446.6 284.6 L448.8 285.2 L450.9 285.7 L453.1 286.2 L455.3 286.7 L457.5 287.1 L459.6 287.4 L461.8 287.7 L464.0 287.9 L466.2 288.0 L468.3 287.9 L470.5 287.8 L472.7 287.6 L474.8 287.3 L477.0 287.1 L479.2 287.0 L481.3 286.9 L483.5 286.9 L485.7 287.0 L487.8 287.2 L490.0 287.5 L492.2 287.8 L494.3 288.1 L496.5 288.5 L498.7 288.9 L500.8 289.3 L503.0 289.8 L505.2 290.3 L507.4 291.0 L509.6 291.6 L511.9 292.4 L514.1 293.1 L516.3 293.8 L518.4 294.5 L520.5 295.1 L522.5 295.7 L524.9 296.4 L527.2 297.2 L529.4 297.9 L531.6 298.5 L533.7 299.0 L535.9 299.2 L538.1 299.0 L540.1 298.5 L542.2 297.7 L544.3 296.7 L546.4 295.6 L548.5 294.3 L550.5 293.1 L552.4 291.9 L554.2 290.8 L556.7 289.3 L559.0 288.0 L561.0 286.6 L563.1 285.0 L565.4 283.1 L567.4 281.3 L569.3 279.3 L571.4 277.2 L573.5 274.9 L575.7 272.3 L578.1 269.4 L580.1 266.9 L582.2 264.2 L584.4 261.3 L586.7 258.2 L589.0 255.1 L591.2 251.9 L593.5 248.9 L595.6 246.0 L597.9 242.8 L600.3 239.5 L602.5 236.2 L604.7 233.1 L606.9 230.0 L609.1 227.1 L611.2 224.5 L613.6 221.7 L616.1 219.1 L618.4 216.7 L620.7 214.6 L622.9 212.6 L624.9 210.8 L627.6 208.7 L629.9 207.2 L632.2 205.7 L634.7 204.0 L636.9 202.2 L639.2 200.3 L641.6 198.3 L644.0 196.3 L646.4 194.2 L648.8 192.1 L651.2 189.9 L653.6 187.6 L655.9 185.4 L658.1 183.4 L660.5 180.9 L662.8 178.5 L665.1 176.3 L667.9 174.6 L669.8 173.9 L671.9 173.5 L674.2 173.3 L676.5 173.1 L678.9 172.9 L681.2 172.6 L683.5 172.1 L685.7 171.3 L687.8 170.3 L689.9 169.1 L692.0 168.0 L694.2 167.0 L696.6 166.2 L699.1 165.9 L701.0 165.9 L703.1 166.0 L705.3 166.3 L707.5 166.7 L709.8 167.2 L712.1 167.8 L714.3 168.4 L716.5 169.1 L718.6 169.9 L720.6 170.7 L722.9 171.9 L725.1 173.2 L727.2 174.8 L729.2 176.4 L731.1 178.0 L733.1 179.5 L735.0 181.0 L737.0 182.2 L739.3 183.4 L741.5 184.4 L743.6 185.3 L745.8 186.1 L748.0 186.8 L750.3 187.6 L752.6 188.4 L754.7 189.2 L756.9 190.0 L759.1 190.8 L761.4 191.6 L763.7 192.3 L765.9 193.0 L768.1 193.5 L770.2 193.8 L772.5 193.9 L774.8 193.9 L777.0 193.6 L779.2 193.3 L781.4 192.8 L783.6 192.4 L785.8 191.9 L788.0 191.4 L790.3 190.8 L792.5 190.1 L794.8 189.4 L797.0 188.6 L799.3 188.0 L801.5 187.4 L803.7 186.8 L805.9 186.3 L808.1 185.7 L810.3 185.2 L812.5 184.8 L814.8 184.5 L817.1 184.5 L819.2 184.7 L821.4 185.1 L823.6 185.6 L825.9 186.2 L828.2 186.8 L830.4 187.4 L832.6 188.0 L834.7 188.4 L837.0 188.8 L839.1 189.3 L841.1 189.7 L843.2 190.0 L845.3 190.2 L847.7 190.2 L850.3 189.9 L852.2 189.6 L854.2 189.2 L856.3 188.6 L858.5 188.0 L860.7 187.4 L863.0 186.7 L865.3 185.9 L867.5 185.1 L869.7 184.2 L871.8 183.4 L873.7 182.5 L876.2 181.3 L878.5 180.0 L880.7 178.6 L882.9 177.2 L885.0 175.7 L887.0 174.1 L889.1 172.5 L891.3 170.8 L893.5 169.0 L895.7 167.1 L898.0 165.2 L900.2 163.1 L902.4 161.1 L904.6 159.1 L906.8 157.1 L908.9 155.2 L911.3 153.1 L913.6 150.9 L915.9 148.8 L918.2 146.7 L920.3 144.8 L922.5 143.0 L924.5 141.5 L926.7 140.0 L928.7 138.9 L930.6 138.0 L932.5 137.2 L934.5 136.4 L936.8 135.7 L938.7 135.2 L940.6 134.7 L942.7 134.3 L944.8 133.9 L947.0 133.5 L949.1 133.1 L951.3 132.7 L953.4 132.3 L955.4 131.8 L957.4 131.4 L959.4 130.9 L961.4 130.4 L963.4 129.9 L965.5 129.4 L967.7 128.8 L970.0 128.2 L971.9 127.7 L974.0 127.2 L976.2 126.6 L978.5 126.0 L980.9 125.4 L983.2 124.7 L985.4 124.2 L987.4 123.6 L989.3 123.1 L990.8 122.7 L992.0 122.4" stroke="#e61ee6" stroke-width="1.9" fill="none" stroke-linejoin="round"/>
<path d="M138.0 172.0 L139.6 172.6 L142.0 173.6 L144.5 174.4 L146.8 174.8 L149.2 174.0 L151.4 172.6 L153.6 172.2 L155.8 173.6 L158.1 176.0 L160.4 179.0 L162.9 182.5 L165.6 186.5 L168.2 190.8 L170.8 195.2 L173.4 199.9 L176.0 204.5 L178.1 208.0 L180.2 211.6 L182.2 215.1 L184.0 218.0 L186.5 222.5 L188.8 225.5 L191.0 226.5 L193.3 226.8 L195.6 226.7 L198.6 225.4 L201.5 224.0 L204.5 224.3 L207.3 224.0 L209.7 220.8 L212.2 216.2 L214.3 212.5 L216.6 208.4 L219.0 204.5 L221.5 200.9 L224.2 197.5 L226.8 194.7 L229.4 192.8 L232.0 191.5 L234.6 189.8 L237.4 187.0 L240.2 183.9 L242.5 182.0 L244.5 181.8 L246.4 185.0 L248.6 190.6 L251.3 198.0 L254.2 204.5 L256.5 208.0 L259.0 211.0 L261.5 213.6 L264.0 216.2 L266.5 218.9 L269.1 221.5 L271.5 223.9 L273.7 226.0 L276.8 229.5 L279.6 231.8 L282.1 232.0 L284.9 231.5 L287.4 231.5 L290.3 232.9 L293.2 235.7 L295.3 238.9 L297.6 242.8 L301.0 246.8 L302.8 248.3 L304.8 250.0 L307.0 251.7 L309.4 253.3 L311.9 254.9 L314.3 256.4 L316.6 257.6 L318.7 258.5 L321.0 259.1 L323.4 259.3 L325.7 259.2 L328.0 259.0 L330.0 258.7 L331.8 258.5 L333.3 258.5 L335.0 258.1 L337.0 260.5 L338.6 262.4 L340.5 265.1 L342.8 268.2 L345.2 271.5 L347.7 274.9 L350.1 278.1 L352.5 280.8 L354.6 283.0 L357.1 285.1 L359.5 286.7 L361.8 287.9 L364.0 288.6 L366.2 289.0 L368.3 288.9 L370.8 288.1 L373.1 286.4 L375.4 284.3 L377.7 282.1 L380.0 280.0 L382.4 277.9 L384.8 275.7 L387.2 273.4 L389.5 271.6 L391.7 270.3 L394.3 269.8 L396.8 270.1 L399.2 270.7 L401.5 271.3 L404.2 271.5 L406.6 271.9 L409.3 273.2 L411.6 275.3 L414.0 278.1 L416.5 281.1 L419.0 284.0 L421.5 286.8 L424.0 289.6 L426.5 292.3 L428.8 294.7 L431.7 297.5 L434.4 300.0 L436.6 302.0 L438.3 304.5 L440.0 305.0 L441.6 303.5 L443.4 301.1 L445.6 298.5 L448.3 296.7 L450.2 296.2 L452.4 296.0 L454.8 296.0 L457.3 296.1 L459.7 296.1 L462.0 296.0 L464.0 295.7 L466.9 294.4 L469.3 292.6 L471.5 290.9 L473.7 289.8 L476.4 289.7 L479.0 290.4 L481.5 290.8 L483.9 290.3 L486.3 289.4 L489.3 288.9 L491.2 288.8 L493.4 288.8 L495.7 288.9 L498.1 289.0 L500.5 289.3 L503.0 289.8 L505.2 290.4 L507.4 291.1 L509.8 292.0 L512.1 292.9 L514.4 293.8 L516.6 294.8 L518.6 295.7 L521.3 296.9 L523.8 298.0 L526.2 299.1 L528.4 300.5 L530.4 302.0 L533.2 306.3 L535.5 311.0 L538.1 312.7 L540.0 311.3 L542.2 308.6 L544.4 304.8 L546.6 300.5 L548.8 296.0 L551.0 291.0 L553.2 285.2 L555.4 279.0 L557.5 273.0 L559.5 267.5 L562.4 259.8 L565.0 252.9 L567.3 245.0 L569.7 230.0 L572.2 214.7 L574.5 206.0 L577.2 197.9 L580.0 189.3 L582.1 182.4 L584.1 175.3 L586.4 167.8 L588.8 160.0 L590.7 154.2 L592.7 147.8 L594.9 141.3 L597.0 135.0 L599.0 129.4 L600.8 124.9 L603.7 118.8 L606.2 115.4 L608.6 114.2 L611.2 115.4 L613.8 118.8 L616.4 123.0 L619.0 127.6 L621.6 133.0 L624.2 138.6 L626.7 144.1 L629.1 149.8 L632.0 156.2 L634.1 160.7 L636.6 165.8 L639.1 171.0 L641.5 175.8 L643.7 179.6 L646.0 182.8 L647.9 184.7 L649.9 186.3 L652.2 188.3 L654.4 190.3 L656.8 192.5 L659.3 194.7 L661.7 196.9 L664.0 199.0 L666.6 201.7 L669.1 204.4 L671.5 206.8 L673.7 208.8 L676.4 210.7 L679.0 211.8 L681.5 211.8 L684.0 210.9 L686.6 208.9 L689.3 205.0 L691.7 200.2 L694.2 193.9 L696.7 187.3 L699.1 181.5 L701.6 175.2 L704.0 169.6 L707.0 164.0 L708.7 161.2 L710.8 158.1 L712.9 155.0 L715.2 151.9 L717.4 149.4 L719.4 147.5 L721.2 146.5 L723.8 147.3 L726.1 150.4 L728.1 154.5 L730.0 158.3 L732.4 162.7 L734.5 167.4 L737.0 172.7 L739.3 177.2 L741.7 182.2 L744.3 187.3 L746.8 192.3 L749.2 197.5 L751.5 202.9 L753.9 207.9 L756.5 211.8 L758.8 213.9 L761.3 215.3 L763.8 216.3 L766.2 217.0 L768.3 217.7 L771.1 219.1 L773.4 220.1 L776.0 219.6 L778.2 217.7 L780.5 214.8 L783.0 211.4 L785.8 207.9 L787.8 205.5 L790.0 203.1 L792.3 200.5 L794.6 197.8 L797.1 195.1 L799.5 192.3 L801.7 189.8 L803.9 187.1 L806.3 184.4 L808.6 181.7 L810.9 179.1 L813.1 176.7 L815.1 174.7 L817.7 172.5 L820.0 170.8 L822.2 169.4 L824.4 168.2 L826.8 166.9 L829.0 165.6 L831.2 164.2 L833.5 162.9 L835.9 161.8 L838.2 161.1 L840.5 161.0 L842.8 161.7 L845.1 163.2 L847.5 165.1 L849.8 167.0 L852.0 168.7 L854.2 169.8 L856.7 170.3 L859.0 170.3 L861.3 170.0 L863.6 169.5 L865.9 168.8 L868.2 168.0 L870.6 167.0 L872.9 165.9 L875.2 164.5 L877.6 163.0 L879.6 161.6 L881.8 160.0 L883.9 158.3 L886.0 156.5 L887.9 154.7 L889.6 152.9 L892.1 149.4 L894.0 145.8 L896.0 142.0 L898.6 137.8 L901.3 133.4 L903.9 128.9 L906.3 124.3 L908.6 119.6 L911.0 115.0 L913.4 110.8 L915.9 106.7 L918.3 102.6 L920.7 98.2 L923.0 93.7 L925.0 90.0 L927.2 86.6 L929.0 84.5 L931.0 82.8 L933.0 82.0 L934.9 82.3 L937.0 83.5 L939.2 84.8 L942.2 88.3 L944.2 92.0 L946.6 96.8 L949.1 102.1 L951.8 107.4 L954.0 111.8 L956.4 116.4 L958.8 121.1 L961.3 125.4 L963.7 129.0 L965.7 131.4 L967.8 133.5 L969.8 135.2 L971.9 136.7 L973.8 137.7 L975.7 138.5 L978.3 138.7 L980.8 138.0 L983.1 136.9 L985.3 136.1 L988.1 135.6 L990.7 135.2 L992.4 134.9" stroke="#10e8f4" stroke-width="1.9" fill="none" stroke-linejoin="round"/>
<rect x="138" y="351" width="858.5" height="2" fill="#b0b0b0"/>
<path d="M138.5 460.0V450.6M140.5 460.0V451.4M142.5 460.0V452.1M144.5 460.0V452.9M146.5 460.0V453.2M148.5 460.0V453.5M150.5 460.0V453.9M152.5 460.0V454.2M154.5 460.0V457.0M156.5 460.0V463.1M158.5 460.0V469.4M160.5 460.0V477.3M162.5 460.0V483.6M164.5 460.0V488.3M166.5 460.0V492.3M168.5 460.0V493.8M170.5 460.0V495.2M172.5 460.0V496.6M174.5 460.0V497.2M176.5 460.0V497.9M178.5 460.0V495.9M180.5 460.0V493.3M182.5 460.0V490.8M184.5 460.0V486.0M186.5 460.0V481.5M188.5 460.0V480.0M190.5 460.0V478.4M192.5 460.0V476.7M194.5 460.0V474.2M196.5 460.0V470.7M198.5 460.0V467.2M200.5 460.0V466.2M202.5 460.0V466.9M204.5 460.0V468.5M206.5 460.0V470.1M208.5 460.0V471.7M210.5 460.0V459.6M212.5 460.0V450.6M214.5 460.0V440.8M216.5 460.0V435.5M218.5 460.0V431.8M220.5 460.0V428.0M222.5 460.0V429.9M224.5 460.0V434.2M226.5 460.0V438.0M228.5 460.0V441.0M230.5 460.0V444.0M232.5 460.0V446.9M234.5 460.0V449.6M236.5 460.0V452.1M238.5 460.0V452.9M240.5 460.0V453.6M242.5 460.0V454.4M244.5 460.0V458.0M246.5 460.0V463.2M248.5 460.0V470.2M250.5 460.0V475.7M252.5 460.0V481.2M254.5 460.0V486.7M256.5 460.0V487.3M258.5 460.0V487.3M260.5 460.0V486.5M262.5 460.0V485.1M264.5 460.0V483.6M266.5 460.0V481.5M268.5 460.0V479.3M270.5 460.0V477.8M272.5 460.0V476.6M274.5 460.0V475.5M276.5 460.0V475.3M278.5 460.0V475.3M280.5 460.0V475.3M282.5 460.0V475.0M284.5 460.0V474.8M286.5 460.0V474.5M288.5 460.0V477.4M290.5 460.0V480.4M292.5 460.0V483.6M294.5 460.0V487.0M296.5 460.0V489.5M298.5 460.0V489.7M300.5 460.0V490.0M302.5 460.0V490.0M304.5 460.0V488.3M306.5 460.0V486.6M308.5 460.0V483.1M310.5 460.0V479.1M312.5 460.0V476.3M314.5 460.0V475.1M316.5 460.0V473.8M318.5 460.0V473.0M320.5 460.0V473.0M322.5 460.0V473.0M324.5 460.0V473.0M326.5 460.0V473.2M328.5 460.0V473.6M330.5 460.0V473.9M332.5 460.0V474.3M334.5 460.0V476.2M336.5 460.0V479.2M338.5 460.0V482.0M340.5 460.0V484.0M342.5 460.0V485.9M344.5 460.0V487.8M346.5 460.0V488.0M348.5 460.0V488.2M350.5 460.0V488.4M352.5 460.0V488.2M354.5 460.0V485.9M356.5 460.0V483.6M358.5 460.0V479.4M360.5 460.0V474.8M362.5 460.0V471.8M364.5 460.0V470.8M366.5 460.0V469.8M368.5 460.0V468.5M370.5 460.0V466.9M372.5 460.0V465.2M374.5 460.0V460.7M376.5 460.0V457.2M378.5 460.0V453.9M380.5 460.0V453.0M382.5 460.0V452.5M384.5 460.0V452.0M386.5 460.0V451.9M388.5 460.0V451.9M390.5 460.0V451.9M392.5 460.0V451.9M394.5 460.0V452.1M396.5 460.0V455.6M398.5 460.0V459.1M400.5 460.0V461.2M402.5 460.0V463.6M404.5 460.0V464.8M406.5 460.0V463.8M408.5 460.0V470.5M410.5 460.0V477.5M412.5 460.0V479.8M414.5 460.0V482.1M416.5 460.0V481.8M418.5 460.0V481.3M420.5 460.0V480.8M422.5 460.0V480.5M424.5 460.0V480.1M426.5 460.0V478.9M428.5 460.0V477.5M430.5 460.0V477.5M432.5 460.0V477.5M434.5 460.0V476.9M436.5 460.0V475.9M438.5 460.0V474.9M440.5 460.0V473.2M442.5 460.0V469.3M444.5 460.0V463.4M446.5 460.0V457.5M448.5 460.0V454.7M450.5 460.0V453.5M452.5 460.0V457.0M454.5 460.0V459.7M456.5 460.0V460.3M458.5 460.0V460.7M460.5 460.0V461.0M462.5 460.0V461.0M464.5 460.0V461.0M466.5 460.0V461.0M468.5 460.0V460.6M470.5 460.0V459.1M472.5 460.0V456.3M474.5 460.0V453.8M476.5 460.0V451.8M478.5 460.0V451.9M480.5 460.0V454.6M482.5 460.0V456.4M484.5 460.0V457.0M486.5 460.0V457.6M488.5 460.0V458.4M490.5 460.0V461.8M492.5 460.0V465.6M494.5 460.0V466.6M496.5 460.0V467.2M498.5 460.0V464.2M500.5 460.0V462.8M502.5 460.0V461.8M504.5 460.0V460.5M506.5 460.0V459.1M508.5 460.0V459.4M510.5 460.0V460.2M512.5 460.0V461.0M514.5 460.0V462.2M516.5 460.0V463.9M518.5 460.0V465.7M520.5 460.0V468.7M522.5 460.0V472.2M524.5 460.0V475.6M526.5 460.0V477.8M528.5 460.0V480.1M530.5 460.0V481.5M532.5 460.0V481.5M534.5 460.0V481.5M536.5 460.0V482.4M538.5 460.0V483.8M540.5 460.0V468.1M542.5 460.0V448.2M544.5 460.0V442.3M546.5 460.0V436.0M548.5 460.0V426.0M550.5 460.0V416.0M552.5 460.0V411.0M554.5 460.0V406.0M556.5 460.0V405.9M558.5 460.0V406.3M560.5 460.0V407.4M562.5 460.0V410.7M564.5 460.0V409.6M566.5 460.0V406.3M568.5 460.0V403.0M570.5 460.0V396.3M572.5 460.0V386.3M574.5 460.0V376.5M576.5 460.0V367.0M578.5 460.0V360.5M580.5 460.0V361.2M582.5 460.0V361.8M584.5 460.0V362.8M586.5 460.0V365.2M588.5 460.0V367.8M590.5 460.0V372.5M592.5 460.0V377.2M594.5 460.0V381.9M596.5 460.0V386.6M598.5 460.0V391.2M600.5 460.0V395.8M602.5 460.0V399.0M604.5 460.0V401.6M606.5 460.0V404.3M608.5 460.0V407.7M610.5 460.0V411.8M612.5 460.0V421.2M614.5 460.0V437.2M616.5 460.0V451.7M618.5 460.0V461.1M620.5 460.0V464.6M622.5 460.0V471.5M624.5 460.0V478.5M626.5 460.0V485.4M628.5 460.0V489.5M630.5 460.0V490.2M632.5 460.0V490.9M634.5 460.0V488.2M636.5 460.0V484.9M638.5 460.0V482.0M640.5 460.0V481.0M642.5 460.0V480.0M644.5 460.0V480.4M646.5 460.0V482.1M648.5 460.0V483.8M650.5 460.0V485.1M652.5 460.0V486.3M654.5 460.0V487.6M656.5 460.0V488.9M658.5 460.0V490.4M660.5 460.0V491.9M662.5 460.0V493.4M664.5 460.0V492.5M666.5 460.0V491.2M668.5 460.0V490.0M670.5 460.0V488.3M672.5 460.0V485.8M674.5 460.0V483.3M676.5 460.0V480.8M678.5 460.0V477.8M680.5 460.0V474.8M682.5 460.0V471.8M684.5 460.0V467.1M686.5 460.0V459.4M688.5 460.0V453.4M690.5 460.0V445.4M692.5 460.0V436.6M694.5 460.0V429.1M696.5 460.0V422.1M698.5 460.0V419.3M700.5 460.0V419.3M702.5 460.0V421.8M704.5 460.0V424.2M706.5 460.0V426.6M708.5 460.0V429.0M710.5 460.0V430.7M712.5 460.0V432.4M714.5 460.0V434.2M716.5 460.0V436.3M718.5 460.0V439.3M720.5 460.0V442.3M722.5 460.0V447.6M724.5 460.0V455.7M726.5 460.0V460.0M728.5 460.0V467.6M730.5 460.0V474.9M732.5 460.0V485.0M734.5 460.0V487.5M736.5 460.0V487.5M738.5 460.0V487.5M740.5 460.0V487.8M742.5 460.0V489.0M744.5 460.0V490.2M746.5 460.0V491.3M748.5 460.0V492.5M750.5 460.0V492.9M752.5 460.0V493.2M754.5 460.0V493.4M756.5 460.0V493.2M758.5 460.0V492.0M760.5 460.0V490.8M762.5 460.0V489.6M764.5 460.0V488.4M766.5 460.0V486.8M768.5 460.0V485.2M770.5 460.0V482.8M772.5 460.0V478.0M774.5 460.0V473.3M776.5 460.0V468.8M778.5 460.0V464.5M780.5 460.0V460.2M782.5 460.0V458.4M784.5 460.0V454.2M786.5 460.0V449.0M788.5 460.0V447.0M790.5 460.0V445.3M792.5 460.0V444.3M794.5 460.0V443.5M796.5 460.0V443.4M798.5 460.0V443.3M800.5 460.0V443.2M802.5 460.0V443.1M804.5 460.0V443.0M806.5 460.0V442.9M808.5 460.0V440.1M810.5 460.0V435.1M812.5 460.0V432.7M814.5 460.0V430.3M816.5 460.0V427.9M818.5 460.0V428.4M820.5 460.0V429.7M822.5 460.0V433.3M824.5 460.0V437.3M826.5 460.0V441.4M828.5 460.0V445.1M830.5 460.0V448.4M832.5 460.0V449.7M834.5 460.0V450.9M836.5 460.0V451.1M838.5 460.0V451.2M840.5 460.0V451.4M842.5 460.0V451.8M844.5 460.0V454.6M846.5 460.0V457.4M848.5 460.0V459.6M850.5 460.0V460.6M852.5 460.0V461.5M854.5 460.0V462.1M856.5 460.0V460.7M858.5 460.0V459.3M860.5 460.0V458.0M862.5 460.0V457.0M864.5 460.0V456.0M866.5 460.0V454.0M868.5 460.0V450.7M870.5 460.0V448.5M872.5 460.0V447.9M874.5 460.0V447.3M876.5 460.0V446.7M878.5 460.0V446.1M880.5 460.0V445.7M882.5 460.0V445.4M884.5 460.0V445.1M886.5 460.0V446.9M888.5 460.0V449.4M890.5 460.0V450.0M892.5 460.0V448.3M894.5 460.0V446.6M896.5 460.0V442.0M898.5 460.0V437.0M900.5 460.0V429.0M902.5 460.0V422.3M904.5 460.0V419.7M906.5 460.0V417.0M908.5 460.0V415.1M910.5 460.0V414.4M912.5 460.0V413.7M914.5 460.0V413.5M916.5 460.0V413.8M918.5 460.0V414.0M920.5 460.0V414.2M922.5 460.0V415.4M924.5 460.0V417.2M926.5 460.0V419.0M928.5 460.0V420.7M930.5 460.0V424.4M932.5 460.0V428.3M934.5 460.0V435.9M936.5 460.0V444.0M938.5 460.0V451.1M940.5 460.0V457.7M942.5 460.0V460.8M944.5 460.0V466.5M946.5 460.0V472.2M948.5 460.0V478.1M950.5 460.0V483.0M952.5 460.0V485.5M954.5 460.0V486.7M956.5 460.0V486.0M958.5 460.0V485.3M960.5 460.0V483.6M962.5 460.0V481.2M964.5 460.0V476.4M966.5 460.0V471.8M968.5 460.0V472.5M970.5 460.0V475.7M972.5 460.0V479.7M974.5 460.0V479.7M976.5 460.0V479.1M978.5 460.0V478.4M980.5 460.0V475.4M982.5 460.0V472.5M984.5 460.0V469.7M986.5 460.0V468.4M988.5 460.0V467.1M990.5 460.0V465.9M992.5 460.0V464.5" stroke="#a0a0a0" stroke-width="1.8" fill="none"/>
<path d="M138 460H996" stroke="#909090" stroke-width="0.5"/>
<path d="M138.5 446.8 L140.5 447.6 L143.4 448.7 L146.2 449.8 L148.8 450.4 L151.4 451.0 L153.8 452.1 L155.9 453.9 L157.8 456.4 L159.9 459.8 L162.4 464.9 L165.0 471.0 L167.6 476.6 L170.2 481.2 L172.8 485.4 L175.2 488.8 L177.3 491.6 L179.3 493.7 L181.3 494.9 L183.3 495.1 L185.3 494.4 L187.5 492.6 L189.9 489.4 L192.5 485.2 L195.1 481.2 L197.7 477.7 L200.3 474.5 L202.7 472.0 L204.8 470.8 L206.8 470.3 L208.9 468.9 L211.3 466.1 L213.9 462.5 L216.5 458.2 L219.2 452.7 L221.9 446.5 L224.2 441.4 L226.6 436.4 L228.7 433.8 L230.8 434.2 L233.3 436.8 L235.7 439.7 L238.4 443.3 L241.0 446.8 L243.2 449.6 L245.1 452.2 L247.1 455.2 L249.1 459.0 L251.2 463.3 L253.2 467.4 L255.2 471.2 L257.3 474.9 L259.3 478.1 L261.2 481.2 L263.1 483.8 L265.4 485.0 L267.2 484.5 L269.1 483.1 L271.3 481.4 L273.4 479.7 L275.6 478.4 L277.8 477.5 L280.1 476.8 L282.4 476.3 L284.6 476.0 L286.6 476.1 L289.3 477.3 L291.7 479.4 L294.4 481.6 L296.4 483.1 L298.6 485.0 L300.9 486.7 L303.2 488.1 L305.3 488.6 L307.8 487.8 L310.2 486.0 L312.5 483.7 L314.7 481.6 L317.4 479.0 L320.0 476.5 L322.5 474.5 L325.1 473.4 L327.7 473.0 L330.3 473.0 L332.8 473.3 L335.4 473.9 L338.1 475.3 L340.4 477.1 L342.8 479.4 L345.2 481.9 L347.5 483.9 L350.3 486.1 L352.9 487.9 L355.3 488.6 L357.3 487.8 L359.2 485.9 L361.6 483.1 L363.5 480.8 L365.6 477.9 L367.9 474.8 L370.2 471.8 L372.5 469.1 L374.7 466.8 L376.9 464.6 L379.1 462.5 L381.3 460.6 L383.4 458.9 L386.0 456.9 L388.5 455.1 L390.8 453.7 L392.8 452.7 L395.1 451.9 L397.5 453.1 L399.3 454.5 L401.4 456.4 L403.7 458.7 L406.1 461.1 L408.4 463.6 L410.8 466.3 L413.3 469.4 L415.8 472.5 L418.1 475.3 L420.0 477.5 L422.9 480.2 L425.4 480.9 L427.2 480.7 L429.1 479.9 L431.2 479.0 L433.4 478.2 L435.7 477.6 L438.3 477.1 L440.7 476.5 L442.8 475.5 L445.6 472.5 L448.1 468.8 L450.3 465.8 L452.6 462.6 L454.8 460.1 L457.4 457.9 L460.2 457.4 L462.0 458.1 L464.0 459.4 L466.1 460.8 L468.2 461.5 L470.1 461.4 L472.0 460.7 L474.0 459.8 L476.2 458.8 L478.3 457.9 L480.5 456.7 L482.9 455.6 L485.1 454.6 L486.9 454.1 L489.5 454.3 L492.3 456.1 L494.0 457.2 L496.0 458.7 L498.1 460.4 L500.3 462.0 L502.4 463.3 L504.3 464.1 L506.7 464.1 L508.8 463.3 L510.7 462.2 L512.4 461.5 L515.0 460.8 L517.7 461.5 L519.7 463.0 L522.0 465.2 L524.5 467.7 L527.1 470.2 L529.0 472.1 L531.2 474.4 L533.4 476.8 L535.5 478.8 L537.5 480.3 L539.1 480.9 L542.2 477.7 L544.5 470.2 L547.3 459.1 L550.0 447.0 L552.0 436.9 L554.0 428.0 L556.4 420.2 L559.0 414.0 L560.9 411.0 L562.9 408.7 L565.0 407.0 L567.1 406.6 L569.2 406.6 L571.6 404.5 L573.6 400.3 L575.7 394.4 L577.9 388.1 L580.0 382.4 L582.1 377.0 L584.2 371.5 L586.3 366.9 L588.4 364.5 L590.4 364.7 L592.5 366.8 L594.5 370.2 L596.8 374.0 L598.8 377.4 L601.0 381.5 L603.2 385.9 L605.4 390.5 L607.4 395.0 L609.6 400.2 L611.6 405.2 L613.6 410.9 L615.8 418.2 L617.8 426.0 L619.9 435.3 L622.1 445.2 L624.3 454.5 L626.3 462.4 L628.5 470.4 L630.4 477.2 L632.5 482.6 L635.1 486.2 L636.9 487.1 L638.8 487.0 L640.8 486.2 L642.9 485.1 L645.1 484.1 L647.4 483.3 L649.7 483.3 L651.8 484.0 L654.0 485.2 L656.2 486.8 L658.5 488.5 L660.8 490.1 L663.1 491.3 L665.2 492.1 L667.3 492.1 L669.5 491.2 L671.7 489.5 L673.8 487.3 L675.8 484.7 L677.7 481.9 L679.6 479.1 L681.5 476.5 L684.0 472.9 L686.5 469.2 L688.8 465.4 L691.0 461.4 L693.0 457.4 L695.8 450.2 L698.2 442.8 L700.6 436.3 L703.2 430.7 L705.8 426.0 L708.2 423.0 L711.1 422.5 L714.0 424.9 L716.5 427.4 L719.1 430.8 L721.6 434.4 L724.6 439.4 L727.4 445.9 L730.2 456.2 L733.1 467.0 L735.3 472.9 L737.6 478.1 L740.0 482.2 L742.3 484.8 L744.6 486.2 L747.4 487.7 L749.5 488.9 L751.8 490.3 L754.3 491.7 L756.8 492.6 L759.2 493.0 L761.6 492.7 L764.0 492.0 L766.4 490.8 L768.7 489.3 L770.9 487.7 L773.2 485.5 L775.3 483.0 L777.4 479.9 L779.7 476.0 L781.9 471.8 L784.3 466.7 L786.8 461.3 L789.2 456.4 L791.4 452.5 L793.8 449.4 L796.0 447.5 L798.1 446.2 L800.2 445.2 L802.3 444.7 L804.2 444.7 L806.4 444.7 L809.0 443.8 L810.8 442.6 L812.9 440.8 L815.2 438.8 L817.4 436.8 L819.7 434.9 L821.8 433.4 L823.6 432.6 L826.2 432.6 L828.4 433.8 L830.3 435.7 L832.4 437.9 L834.5 440.5 L836.6 443.7 L838.8 446.9 L841.2 449.6 L843.4 451.2 L845.9 452.4 L848.4 453.5 L850.8 454.5 L852.9 455.5 L855.4 457.5 L857.5 459.4 L860.0 460.2 L862.0 459.9 L864.2 459.2 L866.6 458.1 L869.0 456.8 L871.5 455.4 L873.6 454.0 L875.9 452.2 L878.2 450.3 L880.5 448.5 L882.8 446.9 L884.9 445.9 L887.4 445.6 L889.8 446.1 L892.1 446.8 L894.3 447.2 L896.3 446.8 L899.1 444.2 L901.6 440.4 L904.0 436.3 L906.5 431.9 L908.9 427.2 L911.6 423.0 L913.9 420.2 L916.4 417.6 L918.9 415.6 L921.2 414.3 L923.9 414.1 L926.3 415.2 L928.8 417.2 L931.4 420.0 L933.9 423.8 L936.5 428.7 L939.0 434.9 L941.6 442.2 L944.1 449.7 L946.6 457.6 L949.1 465.7 L951.8 472.7 L954.0 477.2 L956.4 481.3 L958.9 484.4 L961.3 486.0 L963.7 485.5 L966.2 483.2 L968.6 480.5 L970.9 478.4 L973.6 476.9 L976.2 476.0 L978.5 475.5 L981.4 476.2 L984.3 476.5 L987.0 474.9 L989.9 472.5 L991.9 470.7" stroke="#f0208a" stroke-width="1.9" fill="none" stroke-linejoin="round"/>
<path d="M996.5 44V504" stroke="#a0a0a0" stroke-width="1"/>
<g class="ax"><text x="1000" y="54.7">1.28365</text><path d="M996 52.2H999" stroke="#c0c0c0"/><text x="1000" y="75.5">1.28125</text><path d="M996 73.0H999" stroke="#c0c0c0"/><text x="1000" y="96.3">1.27885</text><path d="M996 93.8H999" stroke="#c0c0c0"/><text x="1000" y="117.0">1.27645</text><path d="M996 114.5H999" stroke="#c0c0c0"/><text x="1000" y="137.8">1.27405</text><path d="M996 135.3H999" stroke="#c0c0c0"/><text x="1000" y="158.6">1.27165</text><path d="M996 156.1H999" stroke="#c0c0c0"/><text x="1000" y="179.4">1.26925</text><path d="M996 176.9H999" stroke="#c0c0c0"/><text x="1000" y="200.2">1.26680</text><path d="M996 197.7H999" stroke="#c0c0c0"/><text x="1000" y="220.9">1.26440</text><path d="M996 218.4H999" stroke="#c0c0c0"/><text x="1000" y="241.7">1.26200</text><path d="M996 239.2H999" stroke="#c0c0c0"/><text x="1000" y="262.5">1.25960</text><path d="M996 260.0H999" stroke="#c0c0c0"/><text x="1000" y="283.3">1.25720</text><path d="M996 280.8H999" stroke="#c0c0c0"/><text x="1000" y="304.1">1.25480</text><path d="M996 301.6H999" stroke="#c0c0c0"/><text x="1000" y="324.8">1.25240</text><path d="M996 322.3H999" stroke="#c0c0c0"/><text x="1000" y="345.6">1.25000</text><path d="M996 343.1H999" stroke="#c0c0c0"/></g>
<rect x="997.8" y="142.5" width="23.2" height="6" fill="#fff"/>
<text x="999.5" y="147.6" style="font-size:5.6px;fill:#222">1.27284</text>
<text class="ax" x="998.5" y="358">0.005173</text>
<text class="ax" x="998.5" y="462.8">0.00</text>
<text class="ax" x="997" y="503">-0.002121</text>
<path d="M138 52.5" />
<path d="M140.2 47h3.6l-1.8 2.2z" fill="#fff"/>
<text x="146.2" y="50.6" style="font-size:5.4px;fill:#d0d0d0">GBPUSD#,H1  1.27476 1.27478 1.27240 1.27284</text>
<text x="140.5" y="358.8" style="font-size:5.4px;fill:#d0d0d0">MACD(12,26,9) -0.000276 -0.000493</text>
<text x="1001.5" y="520.5" style="font-size:11px;fill:#3aaccc;font-family:'Liberation Serif',serif">23</text>
</svg>
</body></html>
